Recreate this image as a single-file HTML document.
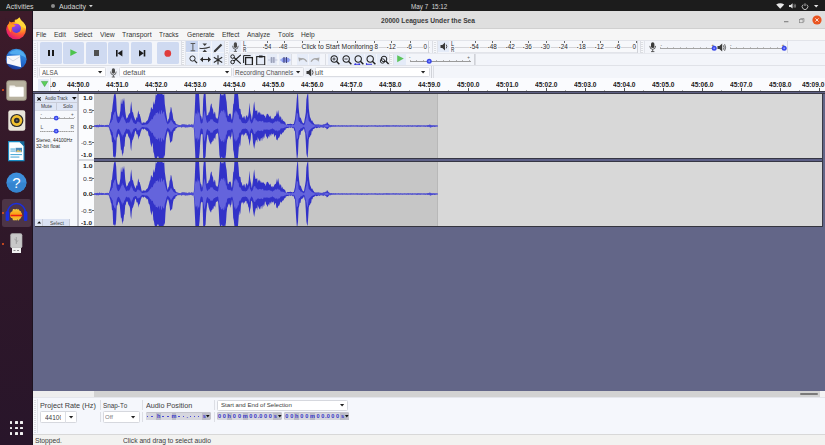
<!DOCTYPE html>
<html><head><meta charset="utf-8"><style>
*{margin:0;padding:0;box-sizing:border-box}
html,body{width:825px;height:445px;overflow:hidden}
body{position:relative;background:#636688;font-family:"Liberation Sans",sans-serif;color:#3c3c3c;font-kerning:none}
.a{position:absolute}
.t{position:absolute;white-space:nowrap;line-height:1;transform-origin:0 0}
svg{position:absolute;overflow:visible}
</style></head><body>
<div class="a" style="left:0px;top:0px;width:825px;height:11.3px;background:#1c1c1c;"></div>
<div class="t" style="left:6px;top:4px;font-size:6.6px;color:#d6d6d6;transform:scaleX(1.0599);">Activities</div>
<div class="a" style="left:51px;top:4.2px;width:4.2px;height:4.2px;background:#8c8c8c;border-radius:50%"></div>
<div class="t" style="left:59px;top:4px;font-size:6.6px;color:#d6d6d6;transform:scaleX(1.0666);">Audacity</div>
<svg style="left:89px;top:5px" width="4" height="3"><path d="M0,0H3.8L1.9,2.2Z" fill="#d6d6d6"/></svg>
<div class="t" style="left:410.7px;top:4px;font-size:6.6px;color:#d6d6d6;transform:scaleX(0.9540);">May&#160;7&#160;&#160;15:12</div>
<svg style="left:776px;top:3px" width="9" height="6"><path d="M0.2,1.6 Q4.2,-1.2 8.2,1.6 L4.2,5.8Z" fill="#e8e8e8"/></svg>
<svg style="left:789px;top:2.8px" width="8" height="6"><path d="M0,2H1.6L3.6,0.2V5.6L1.6,4H0Z" fill="#e0e0e0"/><path d="M4.8,1.6Q6,2.9 4.8,4.2" stroke="#bbb" stroke-width="0.7" fill="none"/><path d="M5.8,0.8Q7.6,2.9 5.8,5" stroke="#999" stroke-width="0.7" fill="none"/></svg>
<svg style="left:801px;top:2.5px" width="8" height="7"><path d="M2.2,1.6A2.8,2.8 0 1 0 5.8,1.6" stroke="#e0e0e0" stroke-width="0.8" fill="none"/><path d="M4,0.4V3" stroke="#e0e0e0" stroke-width="0.8"/></svg>
<svg style="left:813.5px;top:4.8px" width="5" height="3"><path d="M0,0H4.4L2.2,2.4Z" fill="#e8e8e8"/></svg>
<div class="a" style="left:0px;top:11.3px;width:32px;height:433.7px;background:linear-gradient(#3d1b2a,#301829 45%,#28152a);"></div>
<div class="a" style="left:31.6px;top:11px;width:1.2px;height:434px;background:#1e1220;"></div>
<svg style="left:4px;top:15px" width="24" height="26" viewBox="0 0 24 26">
<defs><radialGradient id="ffg" cx="0.78" cy="0.12" r="1.0"><stop offset="0" stop-color="#fff44a"/><stop offset="0.35" stop-color="#ffb321"/><stop offset="0.62" stop-color="#ff5a32"/><stop offset="0.9" stop-color="#e8206a"/></radialGradient>
<linearGradient id="ffp" x1="0.3" y1="0" x2="0.6" y2="1"><stop offset="0" stop-color="#b540ea"/><stop offset="1" stop-color="#4a40d8"/></linearGradient></defs>
<circle cx="12.1" cy="14.4" r="9.9" fill="url(#ffg)"/>
<path d="M10.5,6.5 Q13,4.5 15.5,2.3 Q16.5,5 19,7 Q22.5,10.5 22,14 L14,9Z" fill="#ffd83a"/>
<path d="M1.5,3 H11 L10.5,7.2 Q7,6.5 4,9.5 Q2.8,11 2.2,12.5Z" fill="#3b1b2b"/>
<path d="M4.2,10.2 L5.5,6.2 L7.8,8.2 L9.4,6.4 L10.6,9.4Z" fill="#ff8a1e"/>
<circle cx="12.4" cy="13.3" r="4.6" fill="url(#ffp)"/>
<path d="M3.5,10 Q8,8.3 11.8,10.6 Q10.5,12.4 8.2,12 Q7.2,14.5 6.8,17.5 Q4,15 3.5,10Z" fill="#ff9a1e"/>
</svg>
<svg style="left:5px;top:48px" width="23" height="23" viewBox="0 0 23 23">
<defs><linearGradient id="tbg" x1="0.6" y1="0" x2="0.2" y2="1"><stop offset="0" stop-color="#3a9ae8"/><stop offset="0.6" stop-color="#1f62c8"/><stop offset="1" stop-color="#1a2f8a"/></linearGradient></defs>
<circle cx="11.2" cy="11.2" r="10.4" fill="url(#tbg)"/>
<path d="M4,5 Q9,1 15,2.5 Q20,5 21,10 Q17,6.5 10,6.5 Q6,6.5 4,5Z" fill="#5ab4f4" opacity="0.8"/>
<path d="M1.8,8 L15,7.2 L16.2,19.2 L1.8,15.6Z" fill="#f6f7fa"/>
<path d="M2.5,9 L8,13 L15.2,8.5" stroke="#c4c8d4" stroke-width="0.7" fill="none"/>
</svg>
<svg style="left:6px;top:79.5px" width="21" height="21" viewBox="0 0 21 21">
<rect x="0.3" y="0.3" width="20.4" height="20.4" rx="3" fill="#a29d8a"/>
<rect x="1.2" y="1.2" width="18.6" height="18.6" rx="2.4" fill="#b8b2a0"/>
<path d="M3.5,5.5H8.5L9.8,6.8H17.5V16.5H3.5Z" fill="#f4f2ee"/>
<rect x="3.5" y="7.5" width="14" height="9" fill="#ffffff"/>
</svg>
<div class="a" style="left:2px;top:89px;width:1.8px;height:1.8px;background:#e8541e;border-radius:50%"></div>
<svg style="left:7.5px;top:110px" width="18" height="21" viewBox="0 0 18 21">
<rect x="0.3" y="0.3" width="17" height="20.4" rx="2.2" fill="#e9e5da"/>
<circle cx="8.8" cy="10.5" r="6.6" fill="#2b2b2b"/>
<circle cx="8.8" cy="10.5" r="5.4" fill="#f2c230"/>
<circle cx="8.8" cy="10.5" r="2.8" fill="#2b2b2b"/>
<circle cx="8.8" cy="10.5" r="1" fill="#6a6a6a"/>
</svg>
<svg style="left:8.3px;top:141.3px" width="17" height="21" viewBox="0 0 17 21">
<path d="M0.6,0.6H11.8L16,4.8V19.6H0.6Z" fill="#ffffff" stroke="#1a8cc4" stroke-width="1.1"/>
<path d="M11.2,0.2L16.4,5.4V0.2Z" fill="#1a6a9a"/>
<rect x="2.4" y="7.6" width="4.6" height="0.9" fill="#2a9ad0"/><rect x="2.4" y="9.6" width="4.6" height="0.9" fill="#2a9ad0"/>
<rect x="7.6" y="6.8" width="6.4" height="4.4" fill="#4a8ab8"/><path d="M8,11 L10,8.6 L11.4,10 L12.4,9 L13.8,11Z" fill="#d8c070"/>
<rect x="2.4" y="13.2" width="11.6" height="0.9" fill="#2a9ad0"/><rect x="2.4" y="15.6" width="9" height="0.9" fill="#2a9ad0"/>
</svg>
<svg style="left:5.5px;top:172px" width="21" height="21" viewBox="0 0 21 21">
<circle cx="10.5" cy="10.5" r="10" fill="#3d8fdc"/>
<path d="M0.5,10.5A10,10 0 0 0 20.5,10.5Z" fill="#3584d0"/>
<text x="10.5" y="15.8" font-family="Liberation Sans" font-size="15" fill="#fff" text-anchor="middle">?</text>
</svg>
<div class="a" style="left:2px;top:199px;width:29px;height:28px;background:#4d3547;border-radius:2.5px"></div>
<svg style="left:4px;top:200px" width="25" height="26" viewBox="0 0 25 26">
<defs><linearGradient id="aug" x1="0" y1="0" x2="0" y2="1"><stop offset="0" stop-color="#f0d040"/><stop offset="0.5" stop-color="#ff9a10"/><stop offset="1" stop-color="#f0d040"/></linearGradient></defs>
<path d="M3.6,17 V12.5 A8.9,8.9 0 0 1 21.4,12.5 V17" stroke="#1a2ee0" stroke-width="1.5" fill="none"/>
<rect x="1.6" y="11" width="3.6" height="10" rx="1.6" fill="#1a2ee0"/>
<rect x="19.8" y="11" width="3.6" height="10" rx="1.6" fill="#1a2ee0"/>
<path d="M6.0,14.0 L6.6,12.6 L7.2,11.4 L7.8,12.0 L8.4,11.1 L9.0,9.0 L9.6,9.0 L10.2,9.3 L10.8,9.2 L11.4,9.4 L12.0,8.9 L12.6,8.7 L13.2,10.1 L13.8,8.7 L14.4,9.3 L15.0,9.7 L15.6,10.8 L16.2,11.2 L16.8,11.0 L17.4,12.9 L18.0,13.5 L18.0,16.3 L17.4,16.8 L16.8,18.3 L16.2,18.8 L15.6,19.0 L15.0,20.2 L14.4,20.5 L13.8,20.6 L13.2,19.0 L12.6,20.8 L12.0,19.9 L11.4,20.3 L10.8,20.7 L10.2,19.7 L9.6,20.3 L9.0,20.4 L8.4,18.3 L7.8,17.9 L7.2,17.9 L6.6,17.2 L6.0,15.9Z" fill="url(#aug)"/>
<path d="M6.5,15.5 H18.5" stroke="#e8201a" stroke-width="1.5"/>
</svg>
<div class="a" style="left:2px;top:212px;width:1.8px;height:1.8px;background:#e8541e;border-radius:50%"></div>
<svg style="left:10px;top:233px" width="13" height="21" viewBox="0 0 13 21">
<rect x="0.3" y="0.3" width="12" height="15" rx="2" fill="#b8b8b8"/>
<rect x="1.2" y="1.2" width="10.2" height="13.4" rx="1.5" fill="#c8c8c8"/>
<rect x="2" y="15" width="9" height="5" fill="#f0f0f0"/>
<rect x="3.5" y="17" width="2" height="1" fill="#888"/><rect x="7" y="17" width="2" height="1" fill="#888"/>
<path d="M6.3,4V11 M6.3,7.5L4.3,6 M6.3,9L8.3,7.5" stroke="#909090" stroke-width="0.7" fill="none"/>
</svg>
<div class="a" style="left:2px;top:243px;width:1.8px;height:1.8px;background:#e8541e;border-radius:50%"></div>
<div class="a" style="left:9.5px;top:421.3px;width:2.8px;height:2.8px;background:#f0f0f0;border-radius:0.5px"></div>
<div class="a" style="left:14.8px;top:421.3px;width:2.8px;height:2.8px;background:#f0f0f0;border-radius:0.5px"></div>
<div class="a" style="left:20.1px;top:421.3px;width:2.8px;height:2.8px;background:#f0f0f0;border-radius:0.5px"></div>
<div class="a" style="left:9.5px;top:426.6px;width:2.8px;height:2.8px;background:#f0f0f0;border-radius:0.5px"></div>
<div class="a" style="left:14.8px;top:426.6px;width:2.8px;height:2.8px;background:#f0f0f0;border-radius:0.5px"></div>
<div class="a" style="left:20.1px;top:426.6px;width:2.8px;height:2.8px;background:#f0f0f0;border-radius:0.5px"></div>
<div class="a" style="left:9.5px;top:431.90000000000003px;width:2.8px;height:2.8px;background:#f0f0f0;border-radius:0.5px"></div>
<div class="a" style="left:14.8px;top:431.90000000000003px;width:2.8px;height:2.8px;background:#f0f0f0;border-radius:0.5px"></div>
<div class="a" style="left:20.1px;top:431.90000000000003px;width:2.8px;height:2.8px;background:#f0f0f0;border-radius:0.5px"></div>
<div class="a" style="left:33px;top:11.3px;width:792px;height:16.7px;background:#dfdfdf;"></div>
<div class="a" style="left:33px;top:27.5px;width:792px;height:0.9px;background:#d0d0d0;"></div>
<div class="t" style="left:381.3px;top:17px;font-size:7.2px;color:#3a3a3a;font-weight:bold;transform:scaleX(0.9267);">20000&#160;Leagues&#160;Under&#160;the&#160;Sea</div>
<svg style="left:783.5px;top:20.5px" width="5" height="2"><rect x="0" y="0.3" width="4.4" height="0.9" fill="#6a6a6a"/></svg>
<svg style="left:798.5px;top:18px" width="6" height="6"><rect x="0.5" y="1.5" width="3.5" height="3.2" fill="none" stroke="#8a8a8a" stroke-width="0.7"/><path d="M1.6,1.2V0.5H5V3.8H4.3" fill="none" stroke="#8a8a8a" stroke-width="0.7"/></svg>
<svg style="left:811.7px;top:15.2px" width="10" height="10"><circle cx="5" cy="5" r="4.6" fill="#e95420"/><path d="M3.4,3.4L6.6,6.6M6.6,3.4L3.4,6.6" stroke="#fff" stroke-width="0.8"/></svg>
<div class="a" style="left:33px;top:28.5px;width:792px;height:12px;background:#f6f6f6;"></div>
<div class="t" style="left:36.4px;top:32px;font-size:6.7px;color:#333333;transform:scaleX(0.9726);">File</div>
<div class="t" style="left:54.2px;top:32px;font-size:6.7px;color:#333333;transform:scaleX(1.0221);">Edit</div>
<div class="t" style="left:73.6px;top:32px;font-size:6.7px;color:#333333;transform:scaleX(0.9881);">Select</div>
<div class="t" style="left:99.7px;top:32px;font-size:6.7px;color:#333333;transform:scaleX(1.0191);">View</div>
<div class="t" style="left:122.2px;top:32px;font-size:6.7px;color:#333333;transform:scaleX(1.0324);">Transport</div>
<div class="t" style="left:159.4px;top:32px;font-size:6.7px;color:#333333;transform:scaleX(0.9751);">Tracks</div>
<div class="t" style="left:186.7px;top:32px;font-size:6.7px;color:#333333;transform:scaleX(0.9880);">Generate</div>
<div class="t" style="left:221.7px;top:32px;font-size:6.7px;color:#333333;transform:scaleX(1.0216);">Effect</div>
<div class="t" style="left:247.1px;top:32px;font-size:6.7px;color:#333333;transform:scaleX(0.9691);">Analyze</div>
<div class="t" style="left:278px;top:32px;font-size:6.7px;color:#333333;transform:scaleX(0.9644);">Tools</div>
<div class="t" style="left:301.3px;top:32px;font-size:6.7px;color:#333333;transform:scaleX(0.9942);">Help</div>
<div class="a" style="left:33px;top:40.3px;width:792px;height:50.7px;background:#f3f5fa;"></div>
<div class="a" style="left:33px;top:40.3px;width:792px;height:0.8px;background:#e2e4ea;"></div>
<div class="a" style="left:34.3px;top:42px;width:2.2px;height:22px;background:repeating-linear-gradient(#f8f9fc 0,#f8f9fc 1.1px,#dcdee2 1.1px,#dcdee2 2px)"></div>
<div class="a" style="left:37px;top:42px;width:0.8px;height:22px;background:#e2e4ea;"></div>
<div class="a" style="left:40.3px;top:42px;width:21.6px;height:21.8px;background:#cfdaf1;border-radius:1.6px"></div>
<div class="a" style="left:63px;top:42px;width:21.1px;height:21.8px;background:#cfdaf1;border-radius:1.6px"></div>
<div class="a" style="left:85.9px;top:42px;width:21.0px;height:21.8px;background:#cfdaf1;border-radius:1.6px"></div>
<div class="a" style="left:108.1px;top:42px;width:21.3px;height:21.8px;background:#cfdaf1;border-radius:1.6px"></div>
<div class="a" style="left:131px;top:42px;width:21.2px;height:21.8px;background:#cfdaf1;border-radius:1.6px"></div>
<div class="a" style="left:157.1px;top:42px;width:21.6px;height:21.8px;background:#cfdaf1;border-radius:1.6px"></div>
<div class="a" style="left:48px;top:49.7px;width:2.1px;height:6.3px;background:#1a1a1a;"></div>
<div class="a" style="left:51.8px;top:49.7px;width:2.1px;height:6.3px;background:#1a1a1a;"></div>
<svg style="left:70px;top:49.3px" width="8" height="8"><path d="M0.3,0.2L7.2,3.6L0.3,7.0Z" fill="#4dc44d"/></svg>
<div class="a" style="left:93.6px;top:50.2px;width:5.6px;height:5.4px;background:#505050;"></div>
<svg style="left:115.5px;top:49.5px" width="7" height="7"><rect x="0" y="0" width="1.6" height="6.5" fill="#1a1a1a"/><path d="M6.4,0L1.6,3.25L6.4,6.5Z" fill="#1a1a1a"/></svg>
<svg style="left:139px;top:49.5px" width="7" height="7"><rect x="4.7" y="0" width="1.6" height="6.5" fill="#1a1a1a"/><path d="M0,0L4.8,3.25L0,6.5Z" fill="#1a1a1a"/></svg>
<svg style="left:164px;top:49.5px" width="8" height="8"><circle cx="3.8" cy="3.4" r="3.35" fill="#e03c3c"/></svg>
<div class="a" style="left:180.8px;top:41px;width:0.9px;height:24px;background:#dcdee4;"></div>
<div class="a" style="left:182.3px;top:41px;width:2.2px;height:24px;background:repeating-linear-gradient(#f8f9fc 0,#f8f9fc 1.1px,#dcdee2 1.1px,#dcdee2 2px)"></div>
<div class="a" style="left:185px;top:41px;width:0.8px;height:24px;background:#e2e4ea;"></div>
<div class="a" style="left:186px;top:40.8px;width:12px;height:11.4px;background:#c8d5ef;"></div>
<div class="a" style="left:198.7px;top:40.8px;width:12.0px;height:11.4px;background:#e5ecf9;"></div>
<div class="a" style="left:211.5px;top:40.8px;width:12.0px;height:11.4px;background:#e5ecf9;"></div>
<div class="a" style="left:186px;top:53.3px;width:12px;height:11.6px;background:#e5ecf9;"></div>
<div class="a" style="left:198.7px;top:53.3px;width:12.0px;height:11.6px;background:#e5ecf9;"></div>
<div class="a" style="left:211.5px;top:53.3px;width:12.0px;height:11.6px;background:#e5ecf9;"></div>
<svg style="left:189.5px;top:43px" width="6" height="9"><path d="M0.6,0.5H5.2M2.9,0.5V7.8M0.6,7.8H5.2" stroke="#5a5a5a" stroke-width="1" fill="none"/></svg>
<svg style="left:199px;top:42.5px" width="12" height="10"><path d="M0.5,5.2Q5,6.2 11,4" stroke="#3a3a3a" stroke-width="1.1" fill="none"/><path d="M3.5,0.5H8L5.75,3Z" fill="#3a3a3a"/><path d="M3.5,9H8L5.75,6.5Z" fill="#3a3a3a"/></svg>
<svg style="left:212.5px;top:42.5px" width="11" height="10"><path d="M1.5,8.5L8.5,1.5" stroke="#3a3a3a" stroke-width="2.2"/><path d="M0.5,9.5L1.2,7.4L2.6,8.8Z" fill="#3a3a3a"/></svg>
<svg style="left:188.5px;top:54.5px" width="9" height="9"><circle cx="3.5" cy="3.5" r="2.6" stroke="#2a2a2a" stroke-width="1" fill="none"/><path d="M5.4,5.4L8,8" stroke="#2a2a2a" stroke-width="1.2"/></svg>
<svg style="left:199.5px;top:55.5px" width="11" height="7"><path d="M1.5,3.5H9.5" stroke="#2a2a2a" stroke-width="1.1"/><path d="M0,3.5L3,0.8V6.2Z" fill="#2a2a2a"/><path d="M11,3.5L8,0.8V6.2Z" fill="#2a2a2a"/></svg>
<svg style="left:212.5px;top:54.5px" width="10" height="10"><path d="M5,0.3V9.5M0.8,2.3L9.2,7.5M0.8,7.5L9.2,2.3" stroke="#2a2a2a" stroke-width="1.1"/></svg>
<div class="a" style="left:224.3px;top:41px;width:0.9px;height:24px;background:#dcdee4;"></div>
<div class="a" style="left:225.8px;top:41px;width:2.2px;height:11.5px;background:repeating-linear-gradient(#f8f9fc 0,#f8f9fc 1.1px,#dcdee2 1.1px,#dcdee2 2px)"></div>
<div class="a" style="left:228.5px;top:41px;width:0.8px;height:11.5px;background:#e2e4ea;"></div>
<div class="a" style="left:229.4px;top:41px;width:11.6px;height:11px;background:#e4ebf8;"></div>
<svg style="left:232px;top:42px" width="7" height="10"><rect x="1.8" y="0.3" width="3.2" height="5.6" rx="1.6" fill="#4a4a4a"/><path d="M0.6,3.8Q0.6,7.2 3.4,7.2Q6.2,7.2 6.2,3.8" stroke="#4a4a4a" stroke-width="0.8" fill="none"/><path d="M3.4,7.2V9.4M1.8,9.4H5" stroke="#4a4a4a" stroke-width="0.8"/></svg>
<div class="t" style="left:243px;top:41px;font-size:6.5px;color:#2a2a2a;transform:scaleX(0.8299);">L</div>
<div class="t" style="left:243px;top:47px;font-size:6.5px;color:#2a2a2a;transform:scaleX(0.7030);">R</div>
<div class="a" style="left:246.5px;top:41px;width:183.5px;height:11.5px;background:#f7f8fb;"></div>
<div class="a" style="left:246.5px;top:46.5px;width:183.5px;height:0.9px;background:#d4d4d8;"></div>
<div class="a" style="left:246.5px;top:52.4px;width:183.5px;height:0.7px;background:#e2e4ea;"></div>
<div class="a" style="left:266.7px;top:41.2px;width:0.7px;height:2px;background:#6a6a6a;"></div>
<div class="a" style="left:284.2px;top:41.2px;width:0.7px;height:2px;background:#6a6a6a;"></div>
<div class="a" style="left:301.7px;top:41.2px;width:0.7px;height:2px;background:#6a6a6a;"></div>
<div class="a" style="left:319.4px;top:41.2px;width:0.7px;height:2px;background:#6a6a6a;"></div>
<div class="a" style="left:337.4px;top:41.2px;width:0.7px;height:2px;background:#6a6a6a;"></div>
<div class="a" style="left:355.4px;top:41.2px;width:0.7px;height:2px;background:#6a6a6a;"></div>
<div class="a" style="left:373.5px;top:41.2px;width:0.7px;height:2px;background:#6a6a6a;"></div>
<div class="a" style="left:391.4px;top:41.2px;width:0.7px;height:2px;background:#6a6a6a;"></div>
<div class="a" style="left:409.5px;top:41.2px;width:0.7px;height:2px;background:#6a6a6a;"></div>
<div class="a" style="left:427.7px;top:41.2px;width:0.7px;height:2px;background:#6a6a6a;"></div>
<div class="t" style="left:262.3px;top:44px;font-size:6.5px;color:#2a2a2a;transform:scaleX(0.9367);background:#f7f8fb;padding:0 0.6px 0.5px 0.6px;margin-left:-0.6px">-54</div>
<div class="t" style="left:278.8px;top:44px;font-size:6.5px;color:#2a2a2a;transform:scaleX(0.9367);background:#f7f8fb;padding:0 0.6px 0.5px 0.6px;margin-left:-0.6px">-48</div>
<div class="t" style="left:301.6px;top:44px;font-size:6.5px;color:#2a2a2a;transform:scaleX(1.0348);background:#f7f8fb;padding:0 0.6px 0.5px 0.6px;margin-left:-0.6px">Click&#160;to&#160;Start&#160;Monitoring</div>
<div class="t" style="left:375px;top:44px;font-size:6.5px;color:#2a2a2a;transform:scaleX(0.9682);background:#f7f8fb;padding:0 0.6px 0.5px 0.6px;margin-left:-0.6px">8</div>
<div class="t" style="left:386.7px;top:44px;font-size:6.5px;color:#2a2a2a;transform:scaleX(0.9793);background:#f7f8fb;padding:0 0.6px 0.5px 0.6px;margin-left:-0.6px">-12</div>
<div class="t" style="left:406.6px;top:44px;font-size:6.5px;color:#2a2a2a;transform:scaleX(0.9343);background:#f7f8fb;padding:0 0.6px 0.5px 0.6px;margin-left:-0.6px">-6</div>
<div class="t" style="left:423.5px;top:44px;font-size:6.5px;color:#2a2a2a;transform:scaleX(0.9682);background:#f7f8fb;padding:0 0.6px 0.5px 0.6px;margin-left:-0.6px">0</div>
<div class="a" style="left:428.3px;top:41px;width:0.9px;height:12px;background:#d0d2d8;"></div>
<div class="a" style="left:431.5px;top:41px;width:0.9px;height:12px;background:#dcdee4;"></div>
<div class="a" style="left:434.0px;top:41px;width:2.2px;height:11.5px;background:repeating-linear-gradient(#f8f9fc 0,#f8f9fc 1.1px,#dcdee2 1.1px,#dcdee2 2px)"></div>
<div class="a" style="left:436.7px;top:41px;width:0.8px;height:11.5px;background:#e2e4ea;"></div>
<div class="a" style="left:437.6px;top:41px;width:11.6px;height:11px;background:#e4ebf8;"></div>
<svg style="left:439.5px;top:42.3px" width="9" height="9"><path d="M0.5,3H2.3L5,0.6V8.4L2.3,6H0.5Z" fill="#3a3a3a"/><path d="M6.2,2.6Q7.4,4.5 6.2,6.4" stroke="#3a3a3a" stroke-width="0.9" fill="none"/></svg>
<div class="t" style="left:451.2px;top:41px;font-size:6.5px;color:#2a2a2a;transform:scaleX(0.8299);">L</div>
<div class="t" style="left:451.2px;top:47px;font-size:6.5px;color:#2a2a2a;transform:scaleX(0.7030);">R</div>
<div class="a" style="left:455px;top:41px;width:182.3px;height:11.5px;background:#f7f8fb;"></div>
<div class="a" style="left:455px;top:46.5px;width:182.3px;height:0.9px;background:#d4d4d8;"></div>
<div class="a" style="left:455px;top:52.4px;width:182.3px;height:0.7px;background:#e2e4ea;"></div>
<div class="a" style="left:474.5px;top:41.2px;width:0.7px;height:2px;background:#6a6a6a;"></div>
<div class="t" style="left:469.3px;top:44px;font-size:6.5px;color:#2a2a2a;transform:scaleX(0.9793);background:#f7f8fb;padding:0 0.6px 0.5px 0.6px;margin-left:-0.6px">-54</div>
<div class="a" style="left:492.4px;top:41.2px;width:0.7px;height:2px;background:#6a6a6a;"></div>
<div class="t" style="left:487.2px;top:44px;font-size:6.5px;color:#2a2a2a;transform:scaleX(0.9793);background:#f7f8fb;padding:0 0.6px 0.5px 0.6px;margin-left:-0.6px">-48</div>
<div class="a" style="left:510.3px;top:41.2px;width:0.7px;height:2px;background:#6a6a6a;"></div>
<div class="t" style="left:505.1px;top:44px;font-size:6.5px;color:#2a2a2a;transform:scaleX(0.9793);background:#f7f8fb;padding:0 0.6px 0.5px 0.6px;margin-left:-0.6px">-42</div>
<div class="a" style="left:528.2px;top:41.2px;width:0.7px;height:2px;background:#6a6a6a;"></div>
<div class="t" style="left:523.0px;top:44px;font-size:6.5px;color:#2a2a2a;transform:scaleX(0.9793);background:#f7f8fb;padding:0 0.6px 0.5px 0.6px;margin-left:-0.6px">-36</div>
<div class="a" style="left:546.1px;top:41.2px;width:0.7px;height:2px;background:#6a6a6a;"></div>
<div class="t" style="left:540.9px;top:44px;font-size:6.5px;color:#2a2a2a;transform:scaleX(0.9793);background:#f7f8fb;padding:0 0.6px 0.5px 0.6px;margin-left:-0.6px">-30</div>
<div class="a" style="left:564.0px;top:41.2px;width:0.7px;height:2px;background:#6a6a6a;"></div>
<div class="t" style="left:558.8px;top:44px;font-size:6.5px;color:#2a2a2a;transform:scaleX(0.9793);background:#f7f8fb;padding:0 0.6px 0.5px 0.6px;margin-left:-0.6px">-24</div>
<div class="a" style="left:581.9px;top:41.2px;width:0.7px;height:2px;background:#6a6a6a;"></div>
<div class="t" style="left:576.7px;top:44px;font-size:6.5px;color:#2a2a2a;transform:scaleX(0.9793);background:#f7f8fb;padding:0 0.6px 0.5px 0.6px;margin-left:-0.6px">-18</div>
<div class="a" style="left:599.8px;top:41.2px;width:0.7px;height:2px;background:#6a6a6a;"></div>
<div class="t" style="left:594.6px;top:44px;font-size:6.5px;color:#2a2a2a;transform:scaleX(0.9793);background:#f7f8fb;padding:0 0.6px 0.5px 0.6px;margin-left:-0.6px">-12</div>
<div class="a" style="left:617.7px;top:41.2px;width:0.7px;height:2px;background:#6a6a6a;"></div>
<div class="t" style="left:614.3px;top:44px;font-size:6.5px;color:#2a2a2a;transform:scaleX(0.9862);background:#f7f8fb;padding:0 0.6px 0.5px 0.6px;margin-left:-0.6px">-6</div>
<div class="a" style="left:635.6px;top:41.2px;width:0.7px;height:2px;background:#6a6a6a;"></div>
<div class="t" style="left:632.2px;top:44px;font-size:6.5px;color:#2a2a2a;transform:scaleX(0.9682);background:#f7f8fb;padding:0 0.6px 0.5px 0.6px;margin-left:-0.6px">0</div>
<div class="a" style="left:637.3px;top:41px;width:0.9px;height:12px;background:#d0d2d8;"></div>
<div class="a" style="left:639.5px;top:41px;width:0.9px;height:12px;background:#dcdee4;"></div>
<div class="a" style="left:641.3px;top:41px;width:2.2px;height:11.5px;background:repeating-linear-gradient(#f8f9fc 0,#f8f9fc 1.1px,#dcdee2 1.1px,#dcdee2 2px)"></div>
<div class="a" style="left:644px;top:41px;width:0.8px;height:11.5px;background:#e2e4ea;"></div>
<svg style="left:648.5px;top:42px" width="8" height="10"><rect x="2" y="0.3" width="3.4" height="5.8" rx="1.7" fill="#3a3a3a"/><path d="M0.8,3.9Q0.8,7.3 3.7,7.3Q6.6,7.3 6.6,3.9" stroke="#3a3a3a" stroke-width="0.8" fill="none"/><path d="M3.7,7.3V9.6M2,9.6H5.4" stroke="#3a3a3a" stroke-width="0.8"/></svg>
<div class="a" style="left:660px;top:48.2px;width:53.5px;height:0.8px;background:#a4a4a4;"></div>
<div class="a" style="left:660.0px;top:47.4px;width:0.6px;height:0.9px;background:#c0c0c0;"></div>
<div class="a" style="left:666.6px;top:47.4px;width:0.6px;height:0.9px;background:#c0c0c0;"></div>
<div class="a" style="left:673.2px;top:47.4px;width:0.6px;height:0.9px;background:#c0c0c0;"></div>
<div class="a" style="left:679.8px;top:47.4px;width:0.6px;height:0.9px;background:#c0c0c0;"></div>
<div class="a" style="left:686.4px;top:47.4px;width:0.6px;height:0.9px;background:#c0c0c0;"></div>
<div class="a" style="left:693.0px;top:47.4px;width:0.6px;height:0.9px;background:#c0c0c0;"></div>
<div class="a" style="left:699.6px;top:47.4px;width:0.6px;height:0.9px;background:#c0c0c0;"></div>
<div class="a" style="left:706.2px;top:47.4px;width:0.6px;height:0.9px;background:#c0c0c0;"></div>
<div class="a" style="left:712.8px;top:47.4px;width:0.6px;height:0.9px;background:#c0c0c0;"></div>
<div class="t" style="left:660.5px;top:44.2px;font-size:4.5px;color:#555;">-</div>
<div class="t" style="left:711.6px;top:44.2px;font-size:4.5px;color:#555;">+</div>
<svg style="left:710.5px;top:45px" width="7" height="7"><circle cx="3.2" cy="3.3" r="2.5" fill="#3a48e8"/><circle cx="3.2" cy="3.3" r="1" fill="#8a98ff"/></svg>
<svg style="left:716.5px;top:43px" width="10" height="9"><path d="M0.5,3H2.4L5.2,0.5V8.5L2.4,6H0.5Z" fill="#3a3a3a"/><path d="M6.4,2.4Q7.8,4.5 6.4,6.6M7.6,1.2Q9.6,4.5 7.6,7.8" stroke="#3a3a3a" stroke-width="0.8" fill="none"/></svg>
<div class="a" style="left:729.7px;top:48.2px;width:54px;height:0.8px;background:#a4a4a4;"></div>
<div class="a" style="left:729.7px;top:47.4px;width:0.6px;height:0.9px;background:#c0c0c0;"></div>
<div class="a" style="left:736.4000000000001px;top:47.4px;width:0.6px;height:0.9px;background:#c0c0c0;"></div>
<div class="a" style="left:743.1px;top:47.4px;width:0.6px;height:0.9px;background:#c0c0c0;"></div>
<div class="a" style="left:749.8000000000001px;top:47.4px;width:0.6px;height:0.9px;background:#c0c0c0;"></div>
<div class="a" style="left:756.5px;top:47.4px;width:0.6px;height:0.9px;background:#c0c0c0;"></div>
<div class="a" style="left:763.2px;top:47.4px;width:0.6px;height:0.9px;background:#c0c0c0;"></div>
<div class="a" style="left:769.9000000000001px;top:47.4px;width:0.6px;height:0.9px;background:#c0c0c0;"></div>
<div class="a" style="left:776.6px;top:47.4px;width:0.6px;height:0.9px;background:#c0c0c0;"></div>
<div class="a" style="left:783.3000000000001px;top:47.4px;width:0.6px;height:0.9px;background:#c0c0c0;"></div>
<div class="t" style="left:730px;top:44.2px;font-size:4.5px;color:#555;">-</div>
<div class="t" style="left:781.8px;top:44.2px;font-size:4.5px;color:#555;">+</div>
<svg style="left:780.5px;top:45px" width="7" height="7"><circle cx="3.2" cy="3.3" r="2.5" fill="#3a48e8"/><circle cx="3.2" cy="3.3" r="1" fill="#8a98ff"/></svg>
<div class="a" style="left:787.3px;top:41px;width:0.9px;height:12px;background:#d8dae0;"></div>
<div class="a" style="left:224.5px;top:53px;width:600.5px;height:0.9px;background:#e6e8ee;"></div>
<div class="a" style="left:225.3px;top:54px;width:2.2px;height:11px;background:repeating-linear-gradient(#f8f9fc 0,#f8f9fc 1.1px,#dcdee2 1.1px,#dcdee2 2px)"></div>
<div class="a" style="left:228px;top:54px;width:0.8px;height:11px;background:#e2e4ea;"></div>
<div class="a" style="left:229.3px;top:53.5px;width:11.4px;height:11.2px;background:#e6ecf8;"></div>
<div class="a" style="left:242px;top:53.5px;width:11px;height:11.2px;background:#e6ecf8;"></div>
<div class="a" style="left:254.7px;top:53.5px;width:10.6px;height:11.2px;background:#e6ecf8;"></div>
<div class="a" style="left:266.7px;top:53.5px;width:10.6px;height:11.2px;background:#e6ecf8;"></div>
<div class="a" style="left:278.7px;top:53.5px;width:12.0px;height:11.2px;background:#e6ecf8;"></div>
<div class="a" style="left:297.3px;top:53.5px;width:10.7px;height:11.2px;background:#e6ecf8;"></div>
<div class="a" style="left:309px;top:53.5px;width:11px;height:11.2px;background:#e6ecf8;"></div>
<svg style="left:229.5px;top:54px" width="12" height="11"><circle cx="2.6" cy="8" r="1.8" stroke="#1e1e1e" stroke-width="1" fill="none"/><circle cx="2.6" cy="2.6" r="1.8" stroke="#1e1e1e" stroke-width="1" fill="none"/><path d="M4,3.5L10.8,9.6M4,7L10.8,0.8" stroke="#1e1e1e" stroke-width="1.1"/></svg>
<svg style="left:242.5px;top:54.5px" width="11" height="11"><path d="M0.6,8V0.6H7.6" stroke="#1e1e1e" stroke-width="1" fill="none"/><rect x="2.6" y="2.6" width="6.8" height="7.4" stroke="#1e1e1e" stroke-width="1.3" fill="none"/></svg>
<svg style="left:255.5px;top:54.5px" width="10" height="11"><rect x="0.7" y="1.6" width="8" height="8.4" stroke="#1e1e1e" stroke-width="1.1" fill="none"/><rect x="3" y="0.5" width="3.6" height="2" fill="#1e1e1e"/></svg>
<svg style="left:267.5px;top:56.5px" width="10" height="6"><path d="M0,3H9.5" stroke="#b8bed4" stroke-width="0.8"/><rect x="2.2" y="0.3" width="5" height="5.4" fill="#c0c6dc"/><path d="M3.6,0V6M5.8,0V6" stroke="#8a90a8" stroke-width="0.8"/></svg>
<svg style="left:279.5px;top:56.5px" width="11" height="6"><path d="M0,3H10.5" stroke="#7a8ae8" stroke-width="0.8"/><rect x="1.5" y="0.8" width="8" height="4.4" rx="1.5" fill="#8a9af0"/><path d="M4,0V6M6.4,0V6" stroke="#2a2a5a" stroke-width="0.9"/></svg>
<svg style="left:298.2px;top:56.2px" width="10" height="7"><path d="M2.6,3.6Q5.5,1.2 8.8,5.6" stroke="#a8a8a8" stroke-width="1.4" fill="none"/><path d="M0.3,1.6L4.2,2.2L1.2,5.8Z" fill="#a8a8a8"/></svg>
<svg style="left:310px;top:56.2px" width="10" height="7"><path d="M7.2,3.6Q4.3,1.2 1,5.6" stroke="#a8a8a8" stroke-width="1.4" fill="none"/><path d="M9.5,1.6L5.6,2.2L8.6,5.8Z" fill="#a8a8a8"/></svg>
<div class="a" style="left:291px;top:53.5px;width:0.9px;height:11.5px;background:#dcdee4;"></div>
<div class="a" style="left:324.5px;top:53.5px;width:0.9px;height:11.5px;background:#dcdee4;"></div>
<div class="a" style="left:327.8px;top:53.5px;width:11.7px;height:11.2px;background:#e6ecf8;"></div>
<div class="a" style="left:340px;top:53.5px;width:11.5px;height:11.2px;background:#e6ecf8;"></div>
<div class="a" style="left:352px;top:53.5px;width:12px;height:11.2px;background:#e6ecf8;"></div>
<div class="a" style="left:364.5px;top:53.5px;width:11.7px;height:11.2px;background:#e6ecf8;"></div>
<div class="a" style="left:377px;top:53.5px;width:11px;height:11.2px;background:#e6ecf8;"></div>
<svg style="left:329.5px;top:54.5px" width="11" height="11"><circle cx="4.2" cy="4" r="3.2" stroke="#1e1e1e" stroke-width="1.05" fill="none"/><path d="M6.4,6.2L9.4,9.2" stroke="#1e1e1e" stroke-width="1.4"/><path d="M2.4,4H5.6M4,2.4V5.6" stroke="#1e1e1e" stroke-width="0.8"/></svg>
<svg style="left:341.5px;top:54.5px" width="11" height="11"><circle cx="4.2" cy="4" r="3.2" stroke="#1e1e1e" stroke-width="1.05" fill="none"/><path d="M6.4,6.2L9.4,9.2" stroke="#1e1e1e" stroke-width="1.4"/><path d="M2.4,4H5.6" stroke="#1e1e1e" stroke-width="0.8"/></svg>
<svg style="left:353.5px;top:54.5px" width="11" height="11"><circle cx="4.2" cy="4" r="3.2" stroke="#1e1e1e" stroke-width="1.05" fill="none"/><path d="M6.4,6.2L9.4,9.2" stroke="#1e1e1e" stroke-width="1.4"/><path d="M0.5,9.3H6" stroke="#2a2ae0" stroke-width="0.9"/><path d="M0,9.3L1.8,8V10.6Z M6.5,9.3L4.7,8V10.6Z" fill="#2a2ae0"/></svg>
<svg style="left:365.5px;top:54.5px" width="11" height="11"><circle cx="4.2" cy="4" r="3.2" stroke="#1e1e1e" stroke-width="1.05" fill="none"/><path d="M6.4,6.2L9.4,9.2" stroke="#1e1e1e" stroke-width="1.4"/><path d="M0.6,8V10.6M0.6,9.3H6" stroke="#2a2ae0" stroke-width="0.9"/></svg>
<svg style="left:378.5px;top:54.5px" width="11" height="11"><circle cx="5" cy="4" r="2.8" stroke="#1e1e1e" stroke-width="1" fill="none"/><circle cx="3.5" cy="6" r="2.2" stroke="#1e1e1e" stroke-width="0.9" fill="none"/><path d="M7,6.2L9.6,9" stroke="#1e1e1e" stroke-width="1.3"/></svg>
<div class="a" style="left:388.6px;top:53.5px;width:0.9px;height:11.5px;background:#dcdee4;"></div>
<div class="a" style="left:389.90000000000003px;top:54px;width:2.2px;height:11px;background:repeating-linear-gradient(#f8f9fc 0,#f8f9fc 1.1px,#dcdee2 1.1px,#dcdee2 2px)"></div>
<div class="a" style="left:392.6px;top:54px;width:0.8px;height:11px;background:#e2e4ea;"></div>
<div class="a" style="left:394px;top:53.5px;width:11.6px;height:11.2px;background:#e4ebf8;"></div>
<svg style="left:396.8px;top:55.3px" width="8" height="8"><path d="M0.2,0.2L6.8,3.6L0.2,7.2Z" fill="#5cc45c"/></svg>
<div class="t" style="left:409px;top:56px;font-size:4.5px;color:#555;">-</div>
<div class="a" style="left:409.5px;top:61px;width:61px;height:0.8px;background:#9a9a9a;"></div>
<div class="a" style="left:409.5px;top:60px;width:0.6px;height:1px;background:#b0b0b0;"></div>
<div class="a" style="left:416.1px;top:60px;width:0.6px;height:1px;background:#b0b0b0;"></div>
<div class="a" style="left:422.7px;top:60px;width:0.6px;height:1px;background:#b0b0b0;"></div>
<div class="a" style="left:429.3px;top:60px;width:0.6px;height:1px;background:#b0b0b0;"></div>
<div class="a" style="left:435.9px;top:60px;width:0.6px;height:1px;background:#b0b0b0;"></div>
<div class="a" style="left:442.5px;top:60px;width:0.6px;height:1px;background:#b0b0b0;"></div>
<div class="a" style="left:449.1px;top:60px;width:0.6px;height:1px;background:#b0b0b0;"></div>
<div class="a" style="left:455.7px;top:60px;width:0.6px;height:1px;background:#b0b0b0;"></div>
<div class="a" style="left:462.3px;top:60px;width:0.6px;height:1px;background:#b0b0b0;"></div>
<div class="a" style="left:468.9px;top:60px;width:0.6px;height:1px;background:#b0b0b0;"></div>
<div class="t" style="left:467.2px;top:56px;font-size:4.5px;color:#555;">+</div>
<svg style="left:425.8px;top:58px" width="7" height="7"><circle cx="3.2" cy="3.3" r="2.5" fill="#3a48e8"/><circle cx="3.2" cy="3.3" r="1" fill="#8a98ff"/></svg>
<div class="a" style="left:474px;top:53.5px;width:0.9px;height:11.5px;background:#d0d2d8;"></div>
<div class="a" style="left:475.4px;top:53.5px;width:0.9px;height:11.5px;background:#dcdee4;"></div>
<div class="a" style="left:33px;top:65px;width:792px;height:0.9px;background:#e0e2e8;"></div>
<div class="a" style="left:34.3px;top:66.5px;width:2.2px;height:11px;background:repeating-linear-gradient(#f8f9fc 0,#f8f9fc 1.1px,#dcdee2 1.1px,#dcdee2 2px)"></div>
<div class="a" style="left:37px;top:66.5px;width:0.8px;height:11px;background:#e2e4ea;"></div>
<div class="a" style="left:39px;top:66.8px;width:66.7px;height:10.4px;background:#ffffff;border:0.8px solid #dadce2;border-radius:1.5px"></div>
<div class="t" style="left:42px;top:70px;font-size:6.5px;color:#505050;transform:scaleX(0.9506);">ALSA</div>
<svg style="left:98.3px;top:70.7px" width="5" height="3"><path d="M0,0H4.2L2.1,2.4Z" fill="#222"/></svg>
<div class="a" style="left:106.5px;top:66.8px;width:11px;height:10.4px;background:#eef1f8;"></div>
<svg style="left:110px;top:68px" width="7" height="10"><rect x="1.8" y="0.3" width="3.2" height="5.4" rx="1.6" fill="#4a4a4a"/><path d="M0.6,3.6Q0.6,7 3.4,7Q6.2,7 6.2,3.6" stroke="#4a4a4a" stroke-width="0.8" fill="none"/><path d="M3.4,7V9M1.8,9H5" stroke="#4a4a4a" stroke-width="0.8"/></svg>
<div class="a" style="left:119px;top:66.8px;width:112.7px;height:10.4px;background:#ffffff;border:0.8px solid #dadce2;border-radius:1.5px"></div>
<div class="t" style="left:122.8px;top:70px;font-size:6.5px;color:#505050;transform:scaleX(1.1375);">default</div>
<svg style="left:225.4px;top:70.7px" width="5" height="3"><path d="M0,0H4.2L2.1,2.4Z" fill="#222"/></svg>
<div class="a" style="left:233.2px;top:66.8px;width:70.5px;height:10.4px;background:#f6f7fb;border:0.8px solid #dadce2;border-radius:1.5px"></div>
<div class="t" style="left:234.6px;top:70px;font-size:6.5px;color:#505050;transform:scaleX(0.9882);">Recording&#160;Channels</div>
<svg style="left:295.6px;top:70.7px" width="5" height="3"><path d="M0,0H4.2L2.1,2.4Z" fill="#222"/></svg>
<div class="a" style="left:304.5px;top:66.8px;width:11px;height:10.4px;background:#eef1f8;"></div>
<svg style="left:305.5px;top:68.2px" width="9" height="9"><path d="M0.5,3H2.4L5.2,0.5V8.5L2.4,6H0.5Z" fill="#3a3a3a"/><path d="M6.3,2.3Q7.8,4.5 6.3,6.7" stroke="#3a3a3a" stroke-width="0.9" fill="none"/></svg>
<div class="a" style="left:314.5px;top:66.8px;width:115px;height:10.4px;background:#ffffff;border:0.8px solid #dadce2;border-radius:1.5px"></div>
<div class="t" style="left:315.4px;top:70px;font-size:6.5px;color:#505050;transform:scaleX(1.1653);">ult</div>
<svg style="left:421.4px;top:70.7px" width="5" height="3"><path d="M0,0H4.2L2.1,2.4Z" fill="#222"/></svg>
<div class="a" style="left:431px;top:66px;width:0.9px;height:12px;background:#d0d2d8;"></div>
<div class="a" style="left:432.5px;top:66px;width:0.9px;height:12px;background:#dcdee4;"></div>
<div class="a" style="left:33px;top:77.9px;width:792px;height:0.9px;background:#e6e8ee;"></div>
<div class="a" style="left:33px;top:78.4px;width:792px;height:12.5px;background:#fafbfe;"></div>
<div class="a" style="left:37.8px;top:78.6px;width:11.6px;height:12.2px;background:#e6ecf8;"></div>
<svg style="left:40.8px;top:81.2px" width="8" height="7"><path d="M0.4,0.4H6.8L3.6,5.6Z" fill="#5ad05a" stroke="#3a9a3a" stroke-width="0.5"/></svg>
<div class="a" style="left:49.6px;top:78.4px;width:0.8px;height:12.5px;background:#e0e2e8;"></div>
<div class="t" style="left:50px;top:82px;font-size:6.5px;color:#1a1a1a;font-weight:bold;transform:scaleX(1.1068);">.0</div>
<div class="t" style="left:67.3px;top:82px;font-size:6.5px;color:#1a1a1a;font-weight:bold;transform:scaleX(1.0161);">44:50.0</div>
<div class="a" style="left:78.15px;top:88px;width:0.7px;height:2.9px;background:#555;"></div>
<div class="a" style="left:97.69px;top:89.6px;width:0.6px;height:1.3px;background:#aaa;"></div>
<div class="a" style="left:58.72px;top:89.6px;width:0.6px;height:1.3px;background:#aaa;"></div>
<div class="t" style="left:106.3px;top:82px;font-size:6.5px;color:#1a1a1a;font-weight:bold;transform:scaleX(1.0161);">44:51.0</div>
<div class="a" style="left:117.12px;top:88px;width:0.7px;height:2.9px;background:#555;"></div>
<div class="a" style="left:136.65px;top:89.6px;width:0.6px;height:1.3px;background:#aaa;"></div>
<div class="a" style="left:97.69px;top:89.6px;width:0.6px;height:1.3px;background:#aaa;"></div>
<div class="t" style="left:145.2px;top:82px;font-size:6.5px;color:#1a1a1a;font-weight:bold;transform:scaleX(1.0161);">44:52.0</div>
<div class="a" style="left:156.09px;top:88px;width:0.7px;height:2.9px;background:#555;"></div>
<div class="a" style="left:175.62px;top:89.6px;width:0.6px;height:1.3px;background:#aaa;"></div>
<div class="a" style="left:136.65px;top:89.6px;width:0.6px;height:1.3px;background:#aaa;"></div>
<div class="t" style="left:184.2px;top:82px;font-size:6.5px;color:#1a1a1a;font-weight:bold;transform:scaleX(1.0161);">44:53.0</div>
<div class="a" style="left:195.06px;top:88px;width:0.7px;height:2.9px;background:#555;"></div>
<div class="a" style="left:214.59px;top:89.6px;width:0.6px;height:1.3px;background:#aaa;"></div>
<div class="a" style="left:175.62px;top:89.6px;width:0.6px;height:1.3px;background:#aaa;"></div>
<div class="t" style="left:223.2px;top:82px;font-size:6.5px;color:#1a1a1a;font-weight:bold;transform:scaleX(1.0161);">44:54.0</div>
<div class="a" style="left:234.03px;top:88px;width:0.7px;height:2.9px;background:#555;"></div>
<div class="a" style="left:253.56px;top:89.6px;width:0.6px;height:1.3px;background:#aaa;"></div>
<div class="a" style="left:214.59px;top:89.6px;width:0.6px;height:1.3px;background:#aaa;"></div>
<div class="t" style="left:262.2px;top:82px;font-size:6.5px;color:#1a1a1a;font-weight:bold;transform:scaleX(1.0161);">44:55.0</div>
<div class="a" style="left:273.0px;top:88px;width:0.7px;height:2.9px;background:#555;"></div>
<div class="a" style="left:292.54px;top:89.6px;width:0.6px;height:1.3px;background:#aaa;"></div>
<div class="a" style="left:253.56px;top:89.6px;width:0.6px;height:1.3px;background:#aaa;"></div>
<div class="t" style="left:301.1px;top:82px;font-size:6.5px;color:#1a1a1a;font-weight:bold;transform:scaleX(1.0161);">44:56.0</div>
<div class="a" style="left:311.97px;top:88px;width:0.7px;height:2.9px;background:#555;"></div>
<div class="a" style="left:331.5px;top:89.6px;width:0.6px;height:1.3px;background:#aaa;"></div>
<div class="a" style="left:292.53px;top:89.6px;width:0.6px;height:1.3px;background:#aaa;"></div>
<div class="t" style="left:340.1px;top:82px;font-size:6.5px;color:#1a1a1a;font-weight:bold;transform:scaleX(1.0161);">44:57.0</div>
<div class="a" style="left:350.94px;top:88px;width:0.7px;height:2.9px;background:#555;"></div>
<div class="a" style="left:370.47px;top:89.6px;width:0.6px;height:1.3px;background:#aaa;"></div>
<div class="a" style="left:331.5px;top:89.6px;width:0.6px;height:1.3px;background:#aaa;"></div>
<div class="t" style="left:379.1px;top:82px;font-size:6.5px;color:#1a1a1a;font-weight:bold;transform:scaleX(1.0161);">44:58.0</div>
<div class="a" style="left:389.91px;top:88px;width:0.7px;height:2.9px;background:#555;"></div>
<div class="a" style="left:409.44px;top:89.6px;width:0.6px;height:1.3px;background:#aaa;"></div>
<div class="a" style="left:370.47px;top:89.6px;width:0.6px;height:1.3px;background:#aaa;"></div>
<div class="t" style="left:418.0px;top:82px;font-size:6.5px;color:#1a1a1a;font-weight:bold;transform:scaleX(1.0161);">44:59.0</div>
<div class="a" style="left:428.88px;top:88px;width:0.7px;height:2.9px;background:#555;"></div>
<div class="a" style="left:448.42px;top:89.6px;width:0.6px;height:1.3px;background:#aaa;"></div>
<div class="a" style="left:409.44px;top:89.6px;width:0.6px;height:1.3px;background:#aaa;"></div>
<div class="t" style="left:457.0px;top:82px;font-size:6.5px;color:#1a1a1a;font-weight:bold;transform:scaleX(1.0161);">45:00.0</div>
<div class="a" style="left:467.85px;top:88px;width:0.7px;height:2.9px;background:#555;"></div>
<div class="a" style="left:487.38px;top:89.6px;width:0.6px;height:1.3px;background:#aaa;"></div>
<div class="a" style="left:448.41px;top:89.6px;width:0.6px;height:1.3px;background:#aaa;"></div>
<div class="t" style="left:496.0px;top:82px;font-size:6.5px;color:#1a1a1a;font-weight:bold;transform:scaleX(1.0161);">45:01.0</div>
<div class="a" style="left:506.82px;top:88px;width:0.7px;height:2.9px;background:#555;"></div>
<div class="a" style="left:526.36px;top:89.6px;width:0.6px;height:1.3px;background:#aaa;"></div>
<div class="a" style="left:487.38px;top:89.6px;width:0.6px;height:1.3px;background:#aaa;"></div>
<div class="t" style="left:534.9px;top:82px;font-size:6.5px;color:#1a1a1a;font-weight:bold;transform:scaleX(1.0161);">45:02.0</div>
<div class="a" style="left:545.79px;top:88px;width:0.7px;height:2.9px;background:#555;"></div>
<div class="a" style="left:565.33px;top:89.6px;width:0.6px;height:1.3px;background:#aaa;"></div>
<div class="a" style="left:526.36px;top:89.6px;width:0.6px;height:1.3px;background:#aaa;"></div>
<div class="t" style="left:573.9px;top:82px;font-size:6.5px;color:#1a1a1a;font-weight:bold;transform:scaleX(1.0161);">45:03.0</div>
<div class="a" style="left:584.76px;top:88px;width:0.7px;height:2.9px;background:#555;"></div>
<div class="a" style="left:604.3px;top:89.6px;width:0.6px;height:1.3px;background:#aaa;"></div>
<div class="a" style="left:565.33px;top:89.6px;width:0.6px;height:1.3px;background:#aaa;"></div>
<div class="t" style="left:612.9px;top:82px;font-size:6.5px;color:#1a1a1a;font-weight:bold;transform:scaleX(1.0161);">45:04.0</div>
<div class="a" style="left:623.73px;top:88px;width:0.7px;height:2.9px;background:#555;"></div>
<div class="a" style="left:643.26px;top:89.6px;width:0.6px;height:1.3px;background:#aaa;"></div>
<div class="a" style="left:604.29px;top:89.6px;width:0.6px;height:1.3px;background:#aaa;"></div>
<div class="t" style="left:651.8px;top:82px;font-size:6.5px;color:#1a1a1a;font-weight:bold;transform:scaleX(1.0161);">45:05.0</div>
<div class="a" style="left:662.7px;top:88px;width:0.7px;height:2.9px;background:#555;"></div>
<div class="a" style="left:682.24px;top:89.6px;width:0.6px;height:1.3px;background:#aaa;"></div>
<div class="a" style="left:643.26px;top:89.6px;width:0.6px;height:1.3px;background:#aaa;"></div>
<div class="t" style="left:690.8px;top:82px;font-size:6.5px;color:#1a1a1a;font-weight:bold;transform:scaleX(1.0161);">45:06.0</div>
<div class="a" style="left:701.67px;top:88px;width:0.7px;height:2.9px;background:#555;"></div>
<div class="a" style="left:721.21px;top:89.6px;width:0.6px;height:1.3px;background:#aaa;"></div>
<div class="a" style="left:682.24px;top:89.6px;width:0.6px;height:1.3px;background:#aaa;"></div>
<div class="t" style="left:729.8px;top:82px;font-size:6.5px;color:#1a1a1a;font-weight:bold;transform:scaleX(1.0161);">45:07.0</div>
<div class="a" style="left:740.64px;top:88px;width:0.7px;height:2.9px;background:#555;"></div>
<div class="a" style="left:760.18px;top:89.6px;width:0.6px;height:1.3px;background:#aaa;"></div>
<div class="a" style="left:721.21px;top:89.6px;width:0.6px;height:1.3px;background:#aaa;"></div>
<div class="t" style="left:768.8px;top:82px;font-size:6.5px;color:#1a1a1a;font-weight:bold;transform:scaleX(1.0161);">45:08.0</div>
<div class="a" style="left:779.61px;top:88px;width:0.7px;height:2.9px;background:#555;"></div>
<div class="a" style="left:799.15px;top:89.6px;width:0.6px;height:1.3px;background:#aaa;"></div>
<div class="a" style="left:760.18px;top:89.6px;width:0.6px;height:1.3px;background:#aaa;"></div>
<div class="t" style="left:801.8px;top:82px;font-size:6.5px;color:#1a1a1a;font-weight:bold;transform:scaleX(1.0161);">45:09.0</div>
<div class="a" style="left:818.58px;top:88px;width:0.7px;height:2.9px;background:#555;"></div>
<div class="a" style="left:838.12px;top:89.6px;width:0.6px;height:1.3px;background:#aaa;"></div>
<div class="a" style="left:799.14px;top:89.6px;width:0.6px;height:1.3px;background:#aaa;"></div>
<div class="a" style="left:33px;top:90.9px;width:792px;height:1px;background:#3a3a46;"></div>
<div class="a" style="left:33px;top:91.9px;width:792px;height:1.4px;background:#5e6084;"></div>
<div class="a" style="left:33px;top:93.3px;width:792px;height:0.8px;background:#3a3a46;"></div>
<div class="a" style="left:34.5px;top:93.6px;width:0.7px;height:133.4px;background:#3e3e4c;"></div>
<div class="a" style="left:35.2px;top:94px;width:42.1px;height:132.2px;background:#f6f8fc;"></div>
<div class="a" style="left:77.2px;top:94px;width:1.8px;height:132.2px;background:#c2c4cc;"></div>
<div class="a" style="left:79px;top:94px;width:15px;height:132.2px;background:#fbfcfe;"></div>
<div class="a" style="left:34.5px;top:226.2px;width:788.5px;height:1.3px;background:#34343e;"></div>
<div class="a" style="left:94px;top:94px;width:344px;height:65.2px;background:#c6c6c6;"></div>
<div class="a" style="left:438px;top:94px;width:384px;height:65.2px;background:#d8d8d8;"></div>
<div class="a" style="left:437.2px;top:94px;width:0.8px;height:65.2px;background:#b8b8b8;"></div>
<div class="a" style="left:94px;top:161px;width:344px;height:65.2px;background:#c6c6c6;"></div>
<div class="a" style="left:438px;top:161px;width:384px;height:65.2px;background:#d8d8d8;"></div>
<div class="a" style="left:437.2px;top:161px;width:0.8px;height:65.2px;background:#b8b8b8;"></div>
<div class="a" style="left:94px;top:158.4px;width:728px;height:3.4px;background:#5d6086;"></div>
<div class="a" style="left:94px;top:158.4px;width:728px;height:0.9px;background:#363644;"></div>
<div class="a" style="left:94px;top:160.9px;width:728px;height:0.9px;background:#363644;"></div>
<div class="a" style="left:79px;top:159.2px;width:15px;height:1.6px;background:#d8dae0;"></div>
<div class="a" style="left:822px;top:93.6px;width:0.9px;height:133.5px;background:#3a3a46;"></div>
<div class="a" style="left:35px;top:94px;width:7.5px;height:8.2px;background:#dfe6f5;"></div>
<svg style="left:37.4px;top:96.5px" width="5" height="5"><path d="M0.4,0.4L3.7,3.5M3.7,0.4L0.4,3.5" stroke="#111" stroke-width="1.05"/></svg>
<div class="a" style="left:42.6px;top:94px;width:0.7px;height:8.2px;background:#c8ccd8;"></div>
<div class="a" style="left:43.3px;top:94px;width:33.9px;height:8.2px;background:#dfe6f5;"></div>
<div class="t" style="left:44.5px;top:96px;font-size:5px;color:#383838;transform:scaleX(0.8472);">Audio&#160;Track</div>
<svg style="left:71.5px;top:96.8px" width="5" height="4"><path d="M0,0H4.6L2.3,2.8Z" fill="#111"/></svg>
<div class="a" style="left:35px;top:102.2px;width:42.2px;height:0.7px;background:#c8ccd8;"></div>
<div class="a" style="left:35px;top:102.9px;width:21px;height:7.3px;background:#dfe6f5;"></div>
<div class="a" style="left:56px;top:102.9px;width:0.7px;height:7.3px;background:#c8ccd8;"></div>
<div class="a" style="left:56.7px;top:102.9px;width:20.5px;height:7.3px;background:#dfe6f5;"></div>
<div class="t" style="left:40.5px;top:103.5px;font-size:5px;color:#383838;transform:scaleX(0.9896);">Mute</div>
<div class="t" style="left:62.5px;top:103.5px;font-size:5px;color:#383838;transform:scaleX(0.9593);">Solo</div>
<div class="a" style="left:35px;top:110.2px;width:42.2px;height:0.6px;background:#d8dce6;"></div>
<div class="t" style="left:40.5px;top:112.5px;font-size:4.5px;color:#555;">-</div>
<div class="t" style="left:71px;top:112.5px;font-size:4.5px;color:#555;">+</div>
<div class="a" style="left:40px;top:117.8px;width:34px;height:0.8px;background:#a8a8a8;"></div>
<div class="a" style="left:40.0px;top:117px;width:0.5px;height:0.8px;background:#c0c0c0;"></div>
<div class="a" style="left:44.8px;top:117px;width:0.5px;height:0.8px;background:#c0c0c0;"></div>
<div class="a" style="left:49.6px;top:117px;width:0.5px;height:0.8px;background:#c0c0c0;"></div>
<div class="a" style="left:54.4px;top:117px;width:0.5px;height:0.8px;background:#c0c0c0;"></div>
<div class="a" style="left:59.2px;top:117px;width:0.5px;height:0.8px;background:#c0c0c0;"></div>
<div class="a" style="left:64.0px;top:117px;width:0.5px;height:0.8px;background:#c0c0c0;"></div>
<div class="a" style="left:68.8px;top:117px;width:0.5px;height:0.8px;background:#c0c0c0;"></div>
<div class="a" style="left:73.6px;top:117px;width:0.5px;height:0.8px;background:#c0c0c0;"></div>
<svg style="left:53.3px;top:114.8px" width="7" height="7"><circle cx="3.2" cy="3.2" r="2.4" fill="#3a48e8"/><circle cx="3.2" cy="3.2" r="0.9" fill="#8a98ff"/></svg>
<div class="t" style="left:40.5px;top:125px;font-size:5px;color:#555;">L</div>
<div class="t" style="left:70.5px;top:125px;font-size:5px;color:#555;">R</div>
<div class="a" style="left:40px;top:131.2px;width:34px;height:1.2px;background:#c4c4c4;"></div>
<div class="a" style="left:40.0px;top:130.8px;width:0.5px;height:0.6px;background:#a0a0a0;"></div>
<div class="a" style="left:42.2px;top:130.8px;width:0.5px;height:0.6px;background:#a0a0a0;"></div>
<div class="a" style="left:44.4px;top:130.8px;width:0.5px;height:0.6px;background:#a0a0a0;"></div>
<div class="a" style="left:46.6px;top:130.8px;width:0.5px;height:0.6px;background:#a0a0a0;"></div>
<div class="a" style="left:48.8px;top:130.8px;width:0.5px;height:0.6px;background:#a0a0a0;"></div>
<div class="a" style="left:51.0px;top:130.8px;width:0.5px;height:0.6px;background:#a0a0a0;"></div>
<div class="a" style="left:53.2px;top:130.8px;width:0.5px;height:0.6px;background:#a0a0a0;"></div>
<div class="a" style="left:55.400000000000006px;top:130.8px;width:0.5px;height:0.6px;background:#a0a0a0;"></div>
<div class="a" style="left:57.6px;top:130.8px;width:0.5px;height:0.6px;background:#a0a0a0;"></div>
<div class="a" style="left:59.8px;top:130.8px;width:0.5px;height:0.6px;background:#a0a0a0;"></div>
<div class="a" style="left:62.0px;top:130.8px;width:0.5px;height:0.6px;background:#a0a0a0;"></div>
<div class="a" style="left:64.2px;top:130.8px;width:0.5px;height:0.6px;background:#a0a0a0;"></div>
<div class="a" style="left:66.4px;top:130.8px;width:0.5px;height:0.6px;background:#a0a0a0;"></div>
<div class="a" style="left:68.6px;top:130.8px;width:0.5px;height:0.6px;background:#a0a0a0;"></div>
<div class="a" style="left:70.80000000000001px;top:130.8px;width:0.5px;height:0.6px;background:#a0a0a0;"></div>
<div class="a" style="left:73.0px;top:130.8px;width:0.5px;height:0.6px;background:#a0a0a0;"></div>
<svg style="left:53.3px;top:128.4px" width="7" height="7"><circle cx="3.2" cy="3.2" r="2.4" fill="#3a48e8"/><circle cx="3.2" cy="3.2" r="0.9" fill="#8a98ff"/></svg>
<div class="t" style="left:36px;top:139px;font-size:4.6px;color:#2a2a2a;transform:scaleX(1.0573);">Stereo,&#160;44100Hz</div>
<div class="t" style="left:36px;top:145px;font-size:4.6px;color:#2a2a2a;transform:scaleX(1.1173);">32-bit&#160;float</div>
<div class="a" style="left:35px;top:218.8px;width:7.4px;height:7.4px;background:#dfe6f5;"></div>
<svg style="left:36.8px;top:221.4px" width="5" height="3"><path d="M0.2,2.6L2.2,0.2L4.2,2.6Z" fill="#111"/></svg>
<div class="a" style="left:42.4px;top:218.8px;width:0.7px;height:7.4px;background:#c8ccd8;"></div>
<div class="a" style="left:43px;top:218.8px;width:26.4px;height:7.4px;background:#dae2f3;"></div>
<div class="a" style="left:69.4px;top:218.8px;width:0.6px;height:7.4px;background:#c8ccd8;"></div>
<div class="t" style="left:49.9px;top:222px;font-size:4.8px;color:#444;transform:scaleX(1.0344);">Select</div>
<div class="t" style="left:82.7px;top:96px;font-size:5.8px;color:#1a1a1a;font-weight:bold;transform:scaleX(1.1783);">1.0</div>
<div class="t" style="left:82.7px;top:109px;font-size:5.8px;color:#3a3a3a;transform:scaleX(1.1783);">0.5</div>
<div class="a" style="left:92.4px;top:110.2px;width:1.6px;height:0.7px;background:#666;"></div>
<div class="t" style="left:82.7px;top:125px;font-size:5.8px;color:#1a1a1a;font-weight:bold;transform:scaleX(1.1783);">0.0</div>
<div class="a" style="left:92.4px;top:126.1px;width:1.6px;height:0.7px;background:#666;"></div>
<div class="t" style="left:81.2px;top:141px;font-size:5.8px;color:#3a3a3a;transform:scaleX(1.1006);">-0.5</div>
<div class="a" style="left:92.4px;top:142.2px;width:1.6px;height:0.7px;background:#666;"></div>
<div class="t" style="left:81.2px;top:153px;font-size:5.8px;color:#1a1a1a;font-weight:bold;transform:scaleX(1.1006);">-1.0</div>
<div class="t" style="left:82.7px;top:164px;font-size:5.8px;color:#1a1a1a;font-weight:bold;transform:scaleX(1.1783);">1.0</div>
<div class="t" style="left:82.7px;top:177px;font-size:5.8px;color:#3a3a3a;transform:scaleX(1.1783);">0.5</div>
<div class="a" style="left:92.4px;top:177.9px;width:1.6px;height:0.7px;background:#666;"></div>
<div class="t" style="left:82.7px;top:192px;font-size:5.8px;color:#1a1a1a;font-weight:bold;transform:scaleX(1.1783);">0.0</div>
<div class="a" style="left:92.4px;top:193.6px;width:1.6px;height:0.7px;background:#666;"></div>
<div class="t" style="left:81.2px;top:209px;font-size:5.8px;color:#3a3a3a;transform:scaleX(1.1006);">-0.5</div>
<div class="a" style="left:92.4px;top:210.0px;width:1.6px;height:0.7px;background:#666;"></div>
<div class="t" style="left:81.2px;top:221px;font-size:5.8px;color:#1a1a1a;font-weight:bold;transform:scaleX(1.1006);">-1.0</div>
<svg style="left:0;top:126.2px" width="825" height="1"><path d="M94.0,-0.7 L94.6,-0.6 L95.2,-0.6 L95.8,-0.9 L96.4,-1.0 L97.0,-0.9 L97.6,-1.2 L98.2,-0.8 L98.8,-0.9 L99.4,-1.5 L100.0,-1.3 L100.6,-0.8 L101.2,-1.2 L101.8,-1.1 L102.4,-1.1 L103.0,-0.9 L103.6,-0.9 L104.2,-0.6 L104.8,-0.6 L105.4,-0.9 L106.0,-1.1 L106.6,-1.0 L107.2,-1.2 L107.8,-1.1 L108.4,-1.1 L109.0,-0.9 L109.6,-3.1 L110.2,-5.5 L110.8,-7.9 L111.4,-13.8 L112.0,-14.5 L112.6,-20.5 L113.2,-24.9 L113.8,-30.0 L114.4,-32.0 L115.0,-32.0 L115.6,-32.0 L116.2,-27.3 L116.8,-15.1 L117.4,-11.2 L118.0,-9.1 L118.6,-9.7 L119.2,-9.0 L119.8,-11.9 L120.4,-15.8 L121.0,-27.4 L121.6,-22.3 L122.2,-22.1 L122.8,-27.4 L123.4,-24.2 L124.0,-28.6 L124.6,-23.6 L125.2,-14.7 L125.8,-11.0 L126.4,-6.8 L127.0,-8.9 L127.6,-7.7 L128.2,-10.5 L128.8,-11.6 L129.4,-12.9 L130.0,-12.3 L130.6,-19.6 L131.2,-24.7 L131.8,-18.8 L132.4,-13.8 L133.0,-13.8 L133.6,-10.7 L134.2,-8.8 L134.8,-7.2 L135.4,-5.3 L136.0,-7.1 L136.6,-9.1 L137.2,-7.9 L137.8,-12.7 L138.4,-15.7 L139.0,-12.0 L139.6,-12.1 L140.2,-9.8 L140.8,-7.4 L141.4,-4.3 L142.0,-2.1 L142.6,-3.6 L143.2,-3.3 L143.8,-3.9 L144.4,-3.4 L145.0,-3.0 L145.6,-3.4 L146.2,-4.6 L146.8,-5.1 L147.4,-5.6 L148.0,-6.6 L148.6,-8.8 L149.2,-10.5 L149.8,-13.1 L150.4,-14.0 L151.0,-18.8 L151.6,-18.4 L152.2,-16.6 L152.8,-17.5 L153.4,-25.0 L154.0,-21.3 L154.6,-22.8 L155.2,-26.2 L155.8,-32.0 L156.4,-30.2 L157.0,-32.0 L157.6,-32.0 L158.2,-32.0 L158.8,-32.0 L159.4,-32.0 L160.0,-31.7 L160.6,-32.0 L161.2,-32.0 L161.8,-32.0 L162.4,-32.0 L163.0,-30.9 L163.6,-31.2 L164.2,-32.0 L164.8,-22.1 L165.4,-17.7 L166.0,-13.3 L166.6,-10.0 L167.2,-6.3 L167.8,-4.0 L168.4,-6.9 L169.0,-7.4 L169.6,-13.1 L170.2,-14.2 L170.8,-19.2 L171.4,-18.2 L172.0,-14.3 L172.6,-12.0 L173.2,-7.5 L173.8,-5.4 L174.4,-4.8 L175.0,-4.9 L175.6,-2.8 L176.2,-2.2 L176.8,-1.6 L177.4,-1.7 L178.0,-1.1 L178.6,-1.2 L179.2,-1.0 L179.8,-1.1 L180.4,-0.8 L181.0,-1.0 L181.6,-1.5 L182.2,-1.6 L182.8,-1.7 L183.4,-1.4 L184.0,-1.7 L184.6,-1.6 L185.2,-1.3 L185.8,-1.6 L186.4,-1.5 L187.0,-0.8 L187.6,-0.9 L188.2,-1.4 L188.8,-1.3 L189.4,-1.5 L190.0,-1.4 L190.6,-1.0 L191.2,-1.5 L191.8,-1.7 L192.4,-1.3 L193.0,-1.4 L193.6,-0.9 L194.2,-5.8 L194.8,-17.1 L195.4,-32.0 L196.0,-32.0 L196.6,-31.9 L197.2,-32.0 L197.8,-32.0 L198.4,-32.0 L199.0,-32.0 L199.6,-22.4 L200.2,-12.4 L200.8,-10.1 L201.4,-9.6 L202.0,-6.1 L202.6,-9.6 L203.2,-26.7 L203.8,-32.0 L204.4,-32.0 L205.0,-32.0 L205.6,-32.0 L206.2,-20.0 L206.8,-9.7 L207.4,-11.2 L208.0,-10.4 L208.6,-13.4 L209.2,-13.4 L209.8,-15.6 L210.4,-19.8 L211.0,-21.9 L211.6,-22.6 L212.2,-16.3 L212.8,-19.3 L213.4,-13.3 L214.0,-11.5 L214.6,-14.5 L215.2,-13.2 L215.8,-8.5 L216.4,-8.3 L217.0,-7.0 L217.6,-7.4 L218.2,-9.2 L218.8,-15.3 L219.4,-23.9 L220.0,-32.0 L220.6,-32.0 L221.2,-32.0 L221.8,-30.3 L222.4,-32.0 L223.0,-30.0 L223.6,-32.0 L224.2,-32.0 L224.8,-32.0 L225.4,-32.0 L226.0,-27.2 L226.6,-23.9 L227.2,-15.9 L227.8,-10.5 L228.4,-9.8 L229.0,-12.2 L229.6,-12.3 L230.2,-11.6 L230.8,-12.9 L231.4,-7.9 L232.0,-6.1 L232.6,-12.4 L233.2,-21.4 L233.8,-22.7 L234.4,-32.0 L235.0,-32.0 L235.6,-32.0 L236.2,-32.0 L236.8,-32.0 L237.4,-32.0 L238.0,-32.0 L238.6,-26.4 L239.2,-17.4 L239.8,-17.2 L240.4,-17.0 L241.0,-11.9 L241.6,-11.4 L242.2,-9.3 L242.8,-8.0 L243.4,-8.4 L244.0,-10.2 L244.6,-9.2 L245.2,-6.1 L245.8,-9.2 L246.4,-10.2 L247.0,-10.9 L247.6,-8.3 L248.2,-10.1 L248.8,-14.2 L249.4,-23.5 L250.0,-16.3 L250.6,-12.6 L251.2,-10.3 L251.8,-5.8 L252.4,-9.4 L253.0,-13.9 L253.6,-20.4 L254.2,-24.7 L254.8,-18.8 L255.4,-15.2 L256.0,-15.1 L256.6,-15.6 L257.2,-15.8 L257.8,-10.9 L258.4,-14.5 L259.0,-12.8 L259.6,-14.7 L260.2,-11.1 L260.8,-13.6 L261.4,-11.5 L262.0,-11.3 L262.6,-11.5 L263.2,-11.6 L263.8,-11.5 L264.4,-9.8 L265.0,-10.7 L265.6,-7.7 L266.2,-10.1 L266.8,-12.0 L267.4,-12.2 L268.0,-12.0 L268.6,-10.8 L269.2,-9.8 L269.8,-9.0 L270.4,-10.6 L271.0,-8.0 L271.6,-7.0 L272.2,-8.3 L272.8,-6.4 L273.4,-7.2 L274.0,-8.2 L274.6,-9.5 L275.2,-10.1 L275.8,-10.2 L276.4,-12.2 L277.0,-15.7 L277.6,-11.4 L278.2,-16.3 L278.8,-11.7 L279.4,-10.0 L280.0,-8.0 L280.6,-10.0 L281.2,-8.6 L281.8,-5.5 L282.4,-7.4 L283.0,-5.0 L283.6,-5.2 L284.2,-4.3 L284.8,-4.6 L285.4,-3.2 L286.0,-1.3 L286.6,-1.3 L287.2,-2.2 L287.8,-1.8 L288.4,-1.9 L289.0,-2.0 L289.6,-2.0 L290.2,-2.5 L290.8,-2.0 L291.4,-1.9 L292.0,-2.1 L292.6,-1.4 L293.2,-2.1 L293.8,-1.9 L294.4,-4.5 L295.0,-7.1 L295.6,-12.2 L296.2,-18.7 L296.8,-27.6 L297.4,-32.0 L298.0,-32.0 L298.6,-19.1 L299.2,-13.1 L299.8,-8.5 L300.4,-8.6 L301.0,-7.4 L301.6,-5.6 L302.2,-4.3 L302.8,-3.0 L303.4,-2.8 L304.0,-2.8 L304.6,-6.2 L305.2,-9.6 L305.8,-13.6 L306.4,-26.6 L307.0,-30.0 L307.6,-32.0 L308.2,-32.0 L308.8,-17.7 L309.4,-12.6 L310.0,-9.1 L310.6,-7.7 L311.2,-6.1 L311.8,-4.9 L312.4,-5.6 L313.0,-3.6 L313.6,-3.3 L314.2,-2.0 L314.8,-1.4 L315.4,-1.8 L316.0,-1.1 L316.6,-1.7 L317.2,-1.2 L317.8,-1.7 L318.4,-1.3 L319.0,-1.9 L319.6,-0.9 L320.2,-1.4 L320.8,-1.1 L321.4,-0.9 L322.0,-1.5 L322.6,-1.1 L323.2,-1.7 L323.8,-1.6 L324.4,-1.9 L325.0,-1.2 L325.6,-2.4 L326.2,-2.1 L326.8,-3.5 L327.4,-3.8 L328.0,-2.5 L328.6,-1.9 L329.2,-1.0 L329.8,-1.5 L330.4,-0.7 L331.0,-0.7 L331.6,-0.9 L332.2,-0.8 L332.8,-0.5 L333.4,-0.7 L334.0,-0.7 L334.6,-0.4 L335.2,-0.7 L335.8,-0.7 L336.4,-0.4 L337.0,-0.4 L337.6,-0.4 L338.2,-0.7 L338.8,-0.8 L339.4,-0.6 L340.0,-0.5 L340.6,-0.6 L341.2,-0.7 L341.8,-0.4 L342.4,-0.7 L343.0,-0.6 L343.6,-0.4 L344.2,-0.7 L344.8,-0.5 L345.4,-0.6 L346.0,-0.4 L346.6,-0.7 L347.2,-0.5 L347.8,-0.4 L348.4,-0.4 L349.0,-0.6 L349.6,-0.5 L350.2,-0.7 L350.8,-0.5 L351.4,-0.7 L352.0,-0.4 L352.6,-0.6 L353.2,-0.7 L353.8,-0.5 L354.4,-0.4 L355.0,-0.5 L355.6,-0.5 L356.2,-0.7 L356.8,-0.4 L357.4,-0.7 L358.0,-0.4 L358.6,-0.4 L359.2,-0.5 L359.8,-0.6 L360.4,-0.4 L361.0,-0.7 L361.6,-0.6 L362.2,-0.4 L362.8,-0.7 L363.4,-0.6 L364.0,-0.5 L364.6,-0.5 L365.2,-0.6 L365.8,-0.5 L366.4,-0.6 L367.0,-0.6 L367.6,-0.6 L368.2,-0.6 L368.8,-0.7 L369.4,-0.6 L370.0,-0.6 L370.6,-0.6 L371.2,-0.4 L371.8,-0.7 L372.4,-0.5 L373.0,-0.5 L373.6,-0.5 L374.2,-0.5 L374.8,-0.7 L375.4,-0.7 L376.0,-0.4 L376.6,-0.6 L377.2,-0.4 L377.8,-0.6 L378.4,-0.5 L379.0,-0.4 L379.6,-0.7 L380.2,-0.5 L380.8,-0.4 L381.4,-0.5 L382.0,-0.5 L382.6,-0.5 L383.2,-0.4 L383.8,-0.7 L384.4,-0.6 L385.0,-0.8 L385.6,-0.4 L386.2,-0.7 L386.8,-0.7 L387.4,-0.7 L388.0,-0.6 L388.6,-0.7 L389.2,-0.6 L389.8,-0.7 L390.4,-0.5 L391.0,-0.4 L391.6,-0.6 L392.2,-0.7 L392.8,-0.5 L393.4,-0.7 L394.0,-0.8 L394.6,-0.6 L395.2,-0.6 L395.8,-0.8 L396.4,-0.7 L397.0,-0.6 L397.6,-0.5 L398.2,-0.7 L398.8,-0.5 L399.4,-0.5 L400.0,-0.6 L400.6,-0.8 L401.2,-0.5 L401.8,-0.6 L402.4,-0.4 L403.0,-0.6 L403.6,-0.4 L404.2,-0.6 L404.8,-0.7 L405.4,-0.6 L406.0,-0.6 L406.6,-0.5 L407.2,-0.4 L407.8,-0.7 L408.4,-0.7 L409.0,-0.5 L409.6,-0.5 L410.2,-0.7 L410.8,-0.4 L411.4,-0.6 L412.0,-0.4 L412.6,-0.7 L413.2,-0.5 L413.8,-0.4 L414.4,-0.4 L415.0,-0.8 L415.6,-0.4 L416.2,-0.5 L416.8,-0.4 L417.4,-0.7 L418.0,-0.6 L418.6,-0.7 L419.2,-0.7 L419.8,-0.6 L420.4,-0.5 L421.0,-0.7 L421.6,-0.5 L422.2,-0.6 L422.8,-0.5 L423.4,-0.5 L424.0,-0.8 L424.6,-0.5 L425.2,-0.6 L425.8,-0.6 L426.4,-0.6 L427.0,-0.7 L427.6,-0.7 L428.2,-0.7 L428.8,-0.9 L429.4,-1.3 L430.0,-1.4 L430.6,-0.9 L431.2,-1.1 L431.8,-0.6 L432.4,-0.7 L433.0,-0.6 L433.6,-0.7 L434.2,-0.8 L434.8,-0.5 L435.4,-0.5 L436.0,-0.8 L436.6,-0.6 L437.2,-0.4 L437.8,-0.5 L437.8,0.5 L437.2,0.6 L436.6,0.4 L436.0,0.6 L435.4,0.7 L434.8,0.8 L434.2,0.9 L433.6,0.6 L433.0,0.8 L432.4,1.0 L431.8,1.0 L431.2,1.3 L430.6,1.4 L430.0,1.5 L429.4,0.7 L428.8,1.0 L428.2,0.5 L427.6,0.9 L427.0,0.5 L426.4,0.5 L425.8,0.8 L425.2,0.7 L424.6,0.4 L424.0,0.7 L423.4,0.5 L422.8,0.6 L422.2,0.4 L421.6,0.6 L421.0,0.6 L420.4,0.7 L419.8,0.7 L419.2,0.4 L418.6,0.5 L418.0,0.7 L417.4,0.7 L416.8,0.7 L416.2,0.7 L415.6,0.4 L415.0,0.4 L414.4,0.6 L413.8,0.4 L413.2,0.4 L412.6,0.8 L412.0,0.5 L411.4,0.7 L410.8,0.4 L410.2,0.4 L409.6,0.5 L409.0,0.5 L408.4,0.7 L407.8,0.6 L407.2,0.4 L406.6,0.7 L406.0,0.4 L405.4,0.6 L404.8,0.6 L404.2,0.6 L403.6,0.4 L403.0,0.4 L402.4,0.7 L401.8,0.6 L401.2,0.5 L400.6,0.6 L400.0,0.5 L399.4,0.7 L398.8,0.6 L398.2,0.4 L397.6,0.6 L397.0,0.5 L396.4,0.4 L395.8,0.6 L395.2,0.7 L394.6,0.4 L394.0,0.4 L393.4,0.5 L392.8,0.6 L392.2,0.4 L391.6,0.6 L391.0,0.5 L390.4,0.4 L389.8,0.6 L389.2,0.7 L388.6,0.4 L388.0,0.7 L387.4,0.6 L386.8,0.7 L386.2,0.5 L385.6,0.4 L385.0,0.6 L384.4,0.4 L383.8,0.4 L383.2,0.7 L382.6,0.7 L382.0,0.6 L381.4,0.5 L380.8,0.7 L380.2,0.5 L379.6,0.5 L379.0,0.7 L378.4,0.5 L377.8,0.7 L377.2,0.8 L376.6,0.6 L376.0,0.7 L375.4,0.5 L374.8,0.6 L374.2,0.4 L373.6,0.6 L373.0,0.4 L372.4,0.4 L371.8,0.4 L371.2,0.6 L370.6,0.5 L370.0,0.6 L369.4,0.6 L368.8,0.6 L368.2,0.4 L367.6,0.8 L367.0,0.7 L366.4,0.7 L365.8,0.6 L365.2,0.5 L364.6,0.7 L364.0,0.6 L363.4,0.6 L362.8,0.6 L362.2,0.7 L361.6,0.7 L361.0,0.7 L360.4,0.6 L359.8,0.6 L359.2,0.7 L358.6,0.5 L358.0,0.6 L357.4,0.7 L356.8,0.5 L356.2,0.4 L355.6,0.4 L355.0,0.6 L354.4,0.4 L353.8,0.6 L353.2,0.5 L352.6,0.4 L352.0,0.5 L351.4,0.6 L350.8,0.5 L350.2,0.7 L349.6,0.5 L349.0,0.5 L348.4,0.5 L347.8,0.7 L347.2,0.5 L346.6,0.6 L346.0,0.7 L345.4,0.4 L344.8,0.4 L344.2,0.5 L343.6,0.6 L343.0,0.6 L342.4,0.8 L341.8,0.4 L341.2,0.4 L340.6,0.6 L340.0,0.7 L339.4,0.4 L338.8,0.6 L338.2,0.5 L337.6,0.5 L337.0,0.5 L336.4,0.4 L335.8,0.6 L335.2,0.7 L334.6,0.4 L334.0,0.8 L333.4,0.4 L332.8,0.7 L332.2,0.5 L331.6,0.9 L331.0,0.6 L330.4,1.4 L329.8,0.8 L329.2,1.4 L328.6,1.7 L328.0,2.8 L327.4,3.1 L326.8,3.6 L326.2,2.0 L325.6,1.7 L325.0,1.8 L324.4,0.9 L323.8,1.9 L323.2,1.4 L322.6,1.4 L322.0,1.6 L321.4,1.2 L320.8,1.0 L320.2,1.7 L319.6,1.8 L319.0,1.8 L318.4,1.3 L317.8,1.9 L317.2,1.7 L316.6,2.2 L316.0,2.0 L315.4,1.6 L314.8,2.3 L314.2,2.8 L313.6,3.0 L313.0,3.2 L312.4,5.4 L311.8,4.8 L311.2,8.7 L310.6,9.3 L310.0,10.7 L309.4,11.2 L308.8,13.2 L308.2,23.5 L307.6,32.0 L307.0,30.5 L306.4,27.5 L305.8,16.2 L305.2,7.0 L304.6,5.4 L304.0,2.2 L303.4,3.4 L302.8,4.4 L302.2,4.4 L301.6,5.0 L301.0,5.5 L300.4,9.3 L299.8,8.4 L299.2,12.0 L298.6,14.1 L298.0,27.7 L297.4,32.0 L296.8,31.9 L296.2,24.7 L295.6,14.6 L295.0,5.4 L294.4,4.7 L293.8,2.7 L293.2,1.4 L292.6,2.4 L292.0,1.3 L291.4,1.4 L290.8,1.4 L290.2,2.0 L289.6,1.6 L289.0,1.3 L288.4,2.3 L287.8,1.9 L287.2,2.1 L286.6,2.6 L286.0,2.1 L285.4,3.9 L284.8,4.3 L284.2,4.4 L283.6,6.3 L283.0,6.6 L282.4,6.7 L281.8,8.0 L281.2,8.7 L280.6,7.2 L280.0,9.6 L279.4,11.1 L278.8,12.4 L278.2,11.3 L277.6,14.7 L277.0,13.3 L276.4,14.3 L275.8,9.1 L275.2,9.3 L274.6,11.4 L274.0,9.2 L273.4,7.3 L272.8,8.2 L272.2,8.6 L271.6,7.2 L271.0,10.4 L270.4,8.5 L269.8,8.2 L269.2,11.4 L268.6,9.7 L268.0,12.1 L267.4,13.0 L266.8,10.1 L266.2,11.6 L265.6,8.0 L265.0,7.3 L264.4,11.3 L263.8,13.1 L263.2,10.2 L262.6,11.9 L262.0,15.5 L261.4,11.8 L260.8,12.5 L260.2,15.2 L259.6,15.2 L259.0,13.9 L258.4,12.9 L257.8,10.9 L257.2,16.4 L256.6,14.1 L256.0,13.7 L255.4,16.2 L254.8,19.1 L254.2,23.1 L253.6,19.9 L253.0,16.6 L252.4,8.9 L251.8,7.1 L251.2,6.8 L250.6,13.4 L250.0,15.9 L249.4,20.1 L248.8,13.8 L248.2,12.6 L247.6,8.5 L247.0,10.7 L246.4,6.9 L245.8,6.8 L245.2,7.5 L244.6,9.2 L244.0,7.4 L243.4,10.7 L242.8,7.4 L242.2,9.3 L241.6,8.2 L241.0,11.1 L240.4,18.8 L239.8,21.2 L239.2,16.6 L238.6,24.2 L238.0,32.0 L237.4,32.0 L236.8,32.0 L236.2,32.0 L235.6,32.0 L235.0,32.0 L234.4,32.0 L233.8,26.4 L233.2,23.7 L232.6,11.1 L232.0,5.2 L231.4,10.6 L230.8,10.9 L230.2,14.1 L229.6,9.3 L229.0,11.2 L228.4,9.6 L227.8,12.5 L227.2,13.7 L226.6,18.8 L226.0,28.3 L225.4,32.0 L224.8,32.0 L224.2,31.8 L223.6,32.0 L223.0,32.0 L222.4,32.0 L221.8,30.5 L221.2,32.0 L220.6,32.0 L220.0,32.0 L219.4,28.6 L218.8,17.0 L218.2,8.6 L217.6,6.4 L217.0,8.0 L216.4,7.4 L215.8,8.8 L215.2,13.6 L214.6,12.3 L214.0,11.5 L213.4,14.9 L212.8,14.3 L212.2,16.0 L211.6,16.0 L211.0,18.7 L210.4,17.6 L209.8,16.8 L209.2,14.9 L208.6,13.1 L208.0,8.9 L207.4,8.4 L206.8,13.5 L206.2,18.6 L205.6,30.6 L205.0,32.0 L204.4,32.0 L203.8,32.0 L203.2,32.0 L202.6,8.8 L202.0,7.7 L201.4,8.1 L200.8,9.4 L200.2,16.8 L199.6,26.8 L199.0,32.0 L198.4,32.0 L197.8,32.0 L197.2,32.0 L196.6,32.0 L196.0,32.0 L195.4,32.0 L194.8,19.0 L194.2,6.6 L193.6,1.0 L193.0,1.4 L192.4,1.5 L191.8,1.3 L191.2,1.0 L190.6,0.9 L190.0,0.9 L189.4,1.3 L188.8,0.8 L188.2,1.4 L187.6,1.6 L187.0,0.9 L186.4,1.5 L185.8,1.4 L185.2,1.6 L184.6,0.9 L184.0,1.4 L183.4,0.8 L182.8,0.9 L182.2,1.2 L181.6,1.4 L181.0,1.4 L180.4,0.8 L179.8,0.9 L179.2,1.3 L178.6,1.3 L178.0,1.1 L177.4,1.3 L176.8,2.6 L176.2,1.7 L175.6,2.8 L175.0,4.9 L174.4,4.6 L173.8,5.2 L173.2,7.3 L172.6,11.4 L172.0,15.9 L171.4,15.1 L170.8,16.3 L170.2,17.1 L169.6,12.1 L169.0,8.4 L168.4,5.9 L167.8,4.9 L167.2,6.9 L166.6,9.4 L166.0,12.4 L165.4,19.5 L164.8,31.6 L164.2,29.1 L163.6,32.0 L163.0,32.0 L162.4,32.0 L161.8,32.0 L161.2,32.0 L160.6,32.0 L160.0,32.0 L159.4,32.0 L158.8,32.0 L158.2,30.3 L157.6,30.3 L157.0,32.0 L156.4,32.0 L155.8,32.0 L155.2,32.0 L154.6,31.5 L154.0,27.4 L153.4,26.1 L152.8,19.1 L152.2,16.5 L151.6,21.4 L151.0,19.3 L150.4,16.8 L149.8,11.8 L149.2,10.0 L148.6,9.4 L148.0,5.9 L147.4,4.8 L146.8,5.6 L146.2,4.1 L145.6,4.0 L145.0,2.8 L144.4,2.7 L143.8,3.3 L143.2,3.7 L142.6,2.9 L142.0,2.4 L141.4,4.2 L140.8,5.7 L140.2,8.0 L139.6,10.7 L139.0,9.9 L138.4,13.8 L137.8,9.5 L137.2,8.0 L136.6,8.4 L136.0,5.6 L135.4,4.4 L134.8,6.4 L134.2,9.7 L133.6,11.3 L133.0,13.5 L132.4,13.9 L131.8,17.6 L131.2,25.2 L130.6,21.7 L130.0,14.0 L129.4,12.0 L128.8,11.2 L128.2,10.0 L127.6,7.3 L127.0,8.1 L126.4,7.2 L125.8,10.6 L125.2,11.5 L124.6,20.0 L124.0,21.3 L123.4,27.2 L122.8,27.6 L122.2,30.4 L121.6,23.3 L121.0,24.7 L120.4,18.0 L119.8,11.5 L119.2,8.8 L118.6,7.4 L118.0,9.1 L117.4,11.6 L116.8,11.3 L116.2,25.4 L115.6,32.0 L115.0,30.0 L114.4,32.0 L113.8,30.4 L113.2,30.9 L112.6,16.0 L112.0,16.6 L111.4,9.7 L110.8,8.4 L110.2,5.4 L109.6,3.9 L109.0,0.9 L108.4,1.4 L107.8,0.6 L107.2,1.2 L106.6,1.0 L106.0,0.7 L105.4,1.0 L104.8,0.8 L104.2,0.7 L103.6,0.7 L103.0,0.9 L102.4,1.1 L101.8,1.0 L101.2,1.0 L100.6,0.7 L100.0,1.1 L99.4,0.9 L98.8,0.9 L98.2,1.5 L97.6,1.0 L97.0,1.2 L96.4,1.3 L95.8,0.6 L95.2,0.9 L94.6,0.9 L94.0,0.6Z" fill="#3232c8"/><path d="M94.0,-0.3 L94.6,-0.3 L95.2,-0.3 L95.8,-0.3 L96.4,-0.4 L97.0,-0.5 L97.6,-0.6 L98.2,-0.5 L98.8,-0.5 L99.4,-0.5 L100.0,-0.5 L100.6,-0.4 L101.2,-0.4 L101.8,-0.4 L102.4,-0.4 L103.0,-0.4 L103.6,-0.4 L104.2,-0.4 L104.8,-0.3 L105.4,-0.4 L106.0,-0.4 L106.6,-0.4 L107.2,-0.4 L107.8,-0.4 L108.4,-0.5 L109.0,-0.5 L109.6,-1.2 L110.2,-2.7 L110.8,-3.3 L111.4,-4.2 L112.0,-5.8 L112.6,-6.2 L113.2,-11.3 L113.8,-11.5 L114.4,-14.3 L115.0,-13.4 L115.6,-15.4 L116.2,-9.5 L116.8,-5.8 L117.4,-4.0 L118.0,-2.9 L118.6,-2.8 L119.2,-3.5 L119.8,-4.6 L120.4,-5.7 L121.0,-7.4 L121.6,-8.6 L122.2,-11.3 L122.8,-8.5 L123.4,-9.6 L124.0,-7.4 L124.6,-6.2 L125.2,-5.3 L125.8,-3.5 L126.4,-2.4 L127.0,-3.2 L127.6,-3.4 L128.2,-3.5 L128.8,-3.3 L129.4,-3.8 L130.0,-5.1 L130.6,-6.4 L131.2,-8.8 L131.8,-6.5 L132.4,-6.0 L133.0,-4.2 L133.6,-3.1 L134.2,-3.3 L134.8,-2.1 L135.4,-1.9 L136.0,-2.1 L136.6,-2.4 L137.2,-3.9 L137.8,-4.5 L138.4,-4.4 L139.0,-3.5 L139.6,-3.7 L140.2,-3.4 L140.8,-2.1 L141.4,-1.8 L142.0,-0.9 L142.6,-1.1 L143.2,-1.1 L143.8,-1.2 L144.4,-1.2 L145.0,-1.4 L145.6,-1.6 L146.2,-1.6 L146.8,-1.5 L147.4,-1.8 L148.0,-2.2 L148.6,-2.8 L149.2,-3.6 L149.8,-4.4 L150.4,-5.5 L151.0,-5.3 L151.6,-7.3 L152.2,-7.0 L152.8,-6.5 L153.4,-9.7 L154.0,-9.6 L154.6,-11.5 L155.2,-10.4 L155.8,-13.3 L156.4,-12.9 L157.0,-12.9 L157.6,-14.1 L158.2,-13.0 L158.8,-11.6 L159.4,-16.3 L160.0,-11.4 L160.6,-11.9 L161.2,-15.5 L161.8,-16.0 L162.4,-11.7 L163.0,-13.5 L163.6,-14.6 L164.2,-14.6 L164.8,-9.7 L165.4,-8.0 L166.0,-5.4 L166.6,-3.6 L167.2,-2.6 L167.8,-1.5 L168.4,-2.4 L169.0,-2.8 L169.6,-3.8 L170.2,-4.4 L170.8,-6.1 L171.4,-5.8 L172.0,-4.5 L172.6,-4.0 L173.2,-2.3 L173.8,-2.5 L174.4,-1.6 L175.0,-1.6 L175.6,-1.0 L176.2,-0.9 L176.8,-1.0 L177.4,-0.8 L178.0,-0.4 L178.6,-0.5 L179.2,-0.4 L179.8,-0.5 L180.4,-0.5 L181.0,-0.5 L181.6,-0.6 L182.2,-0.5 L182.8,-0.6 L183.4,-0.6 L184.0,-0.6 L184.6,-0.5 L185.2,-0.6 L185.8,-0.6 L186.4,-0.5 L187.0,-0.5 L187.6,-0.5 L188.2,-0.6 L188.8,-0.6 L189.4,-0.5 L190.0,-0.6 L190.6,-0.5 L191.2,-0.6 L191.8,-0.5 L192.4,-0.6 L193.0,-0.4 L193.6,-0.6 L194.2,-1.9 L194.8,-8.1 L195.4,-11.9 L196.0,-13.7 L196.6,-12.3 L197.2,-11.3 L197.8,-16.3 L198.4,-12.3 L199.0,-14.3 L199.6,-11.2 L200.2,-5.3 L200.8,-2.8 L201.4,-2.4 L202.0,-2.7 L202.6,-3.6 L203.2,-8.5 L203.8,-11.9 L204.4,-16.0 L205.0,-13.3 L205.6,-10.1 L206.2,-6.2 L206.8,-3.9 L207.4,-3.1 L208.0,-3.6 L208.6,-4.5 L209.2,-5.3 L209.8,-4.6 L210.4,-7.1 L211.0,-6.2 L211.6,-6.8 L212.2,-6.9 L212.8,-6.1 L213.4,-5.1 L214.0,-4.3 L214.6,-4.0 L215.2,-4.0 L215.8,-3.1 L216.4,-2.9 L217.0,-3.2 L217.6,-2.3 L218.2,-3.1 L218.8,-8.0 L219.4,-10.8 L220.0,-12.7 L220.6,-13.6 L221.2,-15.8 L221.8,-15.0 L222.4,-14.3 L223.0,-16.1 L223.6,-16.3 L224.2,-12.0 L224.8,-16.2 L225.4,-13.6 L226.0,-8.3 L226.6,-8.9 L227.2,-4.7 L227.8,-4.6 L228.4,-4.3 L229.0,-3.8 L229.6,-3.9 L230.2,-4.5 L230.8,-3.6 L231.4,-3.4 L232.0,-2.4 L232.6,-3.8 L233.2,-6.5 L233.8,-10.0 L234.4,-14.8 L235.0,-12.3 L235.6,-15.5 L236.2,-15.2 L236.8,-13.8 L237.4,-13.4 L238.0,-10.9 L238.6,-11.8 L239.2,-6.2 L239.8,-7.5 L240.4,-6.5 L241.0,-5.4 L241.6,-4.0 L242.2,-3.3 L242.8,-3.1 L243.4,-2.8 L244.0,-2.9 L244.6,-2.8 L245.2,-2.6 L245.8,-2.7 L246.4,-3.0 L247.0,-2.9 L247.6,-4.4 L248.2,-4.7 L248.8,-6.5 L249.4,-8.8 L250.0,-5.2 L250.6,-4.3 L251.2,-2.8 L251.8,-2.5 L252.4,-3.5 L253.0,-4.5 L253.6,-7.3 L254.2,-7.5 L254.8,-8.2 L255.4,-7.4 L256.0,-5.1 L256.6,-6.5 L257.2,-4.5 L257.8,-4.8 L258.4,-4.3 L259.0,-5.1 L259.6,-5.1 L260.2,-4.4 L260.8,-5.2 L261.4,-4.3 L262.0,-4.9 L262.6,-5.3 L263.2,-4.7 L263.8,-3.3 L264.4,-4.1 L265.0,-3.0 L265.6,-3.9 L266.2,-3.4 L266.8,-3.4 L267.4,-3.4 L268.0,-3.7 L268.6,-3.7 L269.2,-4.2 L269.8,-3.5 L270.4,-3.3 L271.0,-3.4 L271.6,-3.0 L272.2,-2.5 L272.8,-2.6 L273.4,-3.4 L274.0,-3.0 L274.6,-4.2 L275.2,-4.2 L275.8,-4.9 L276.4,-4.4 L277.0,-4.3 L277.6,-5.5 L278.2,-5.2 L278.8,-3.9 L279.4,-4.6 L280.0,-3.9 L280.6,-2.6 L281.2,-2.6 L281.8,-2.3 L282.4,-2.6 L283.0,-1.9 L283.6,-2.2 L284.2,-1.7 L284.8,-1.4 L285.4,-1.5 L286.0,-0.9 L286.6,-0.7 L287.2,-0.9 L287.8,-0.9 L288.4,-0.8 L289.0,-0.9 L289.6,-0.9 L290.2,-0.7 L290.8,-0.7 L291.4,-0.8 L292.0,-0.9 L292.6,-0.9 L293.2,-0.9 L293.8,-0.7 L294.4,-1.5 L295.0,-2.7 L295.6,-5.1 L296.2,-9.2 L296.8,-13.5 L297.4,-12.7 L298.0,-11.9 L298.6,-5.3 L299.2,-3.9 L299.8,-4.2 L300.4,-2.5 L301.0,-2.4 L301.6,-2.2 L302.2,-1.7 L302.8,-1.4 L303.4,-1.0 L304.0,-0.8 L304.6,-1.8 L305.2,-3.5 L305.8,-6.5 L306.4,-8.6 L307.0,-12.0 L307.6,-13.9 L308.2,-9.1 L308.8,-4.9 L309.4,-4.6 L310.0,-3.9 L310.6,-3.2 L311.2,-2.4 L311.8,-2.2 L312.4,-1.7 L313.0,-1.5 L313.6,-1.2 L314.2,-1.0 L314.8,-0.6 L315.4,-0.6 L316.0,-0.6 L316.6,-0.6 L317.2,-0.7 L317.8,-0.6 L318.4,-0.5 L319.0,-0.7 L319.6,-0.7 L320.2,-0.6 L320.8,-0.5 L321.4,-0.6 L322.0,-0.6 L322.6,-0.5 L323.2,-0.5 L323.8,-0.5 L324.4,-0.6 L325.0,-0.7 L325.6,-1.0 L326.2,-1.2 L326.8,-1.3 L327.4,-1.3 L328.0,-0.9 L328.6,-0.6 L329.2,-0.4 L329.8,-0.4 L330.4,-0.4 L331.0,-0.3 L331.6,-0.4 L332.2,-0.3 L332.8,-0.3 L333.4,-0.3 L334.0,-0.2 L334.6,-0.2 L335.2,-0.2 L335.8,-0.2 L336.4,-0.3 L337.0,-0.2 L337.6,-0.2 L338.2,-0.2 L338.8,-0.3 L339.4,-0.2 L340.0,-0.2 L340.6,-0.2 L341.2,-0.3 L341.8,-0.2 L342.4,-0.2 L343.0,-0.3 L343.6,-0.2 L344.2,-0.3 L344.8,-0.3 L345.4,-0.2 L346.0,-0.3 L346.6,-0.2 L347.2,-0.3 L347.8,-0.2 L348.4,-0.3 L349.0,-0.3 L349.6,-0.2 L350.2,-0.2 L350.8,-0.2 L351.4,-0.3 L352.0,-0.3 L352.6,-0.2 L353.2,-0.2 L353.8,-0.3 L354.4,-0.2 L355.0,-0.2 L355.6,-0.3 L356.2,-0.3 L356.8,-0.3 L357.4,-0.2 L358.0,-0.2 L358.6,-0.2 L359.2,-0.3 L359.8,-0.2 L360.4,-0.2 L361.0,-0.2 L361.6,-0.2 L362.2,-0.3 L362.8,-0.3 L363.4,-0.2 L364.0,-0.2 L364.6,-0.3 L365.2,-0.2 L365.8,-0.2 L366.4,-0.2 L367.0,-0.2 L367.6,-0.2 L368.2,-0.3 L368.8,-0.2 L369.4,-0.3 L370.0,-0.3 L370.6,-0.3 L371.2,-0.2 L371.8,-0.3 L372.4,-0.2 L373.0,-0.2 L373.6,-0.2 L374.2,-0.3 L374.8,-0.2 L375.4,-0.2 L376.0,-0.3 L376.6,-0.2 L377.2,-0.2 L377.8,-0.3 L378.4,-0.2 L379.0,-0.2 L379.6,-0.2 L380.2,-0.2 L380.8,-0.2 L381.4,-0.2 L382.0,-0.2 L382.6,-0.3 L383.2,-0.3 L383.8,-0.3 L384.4,-0.2 L385.0,-0.2 L385.6,-0.2 L386.2,-0.2 L386.8,-0.2 L387.4,-0.3 L388.0,-0.3 L388.6,-0.3 L389.2,-0.2 L389.8,-0.2 L390.4,-0.2 L391.0,-0.2 L391.6,-0.2 L392.2,-0.3 L392.8,-0.2 L393.4,-0.2 L394.0,-0.2 L394.6,-0.2 L395.2,-0.2 L395.8,-0.2 L396.4,-0.3 L397.0,-0.3 L397.6,-0.2 L398.2,-0.2 L398.8,-0.3 L399.4,-0.2 L400.0,-0.2 L400.6,-0.3 L401.2,-0.2 L401.8,-0.3 L402.4,-0.3 L403.0,-0.2 L403.6,-0.3 L404.2,-0.3 L404.8,-0.2 L405.4,-0.2 L406.0,-0.2 L406.6,-0.2 L407.2,-0.3 L407.8,-0.2 L408.4,-0.2 L409.0,-0.2 L409.6,-0.2 L410.2,-0.2 L410.8,-0.3 L411.4,-0.2 L412.0,-0.2 L412.6,-0.2 L413.2,-0.2 L413.8,-0.2 L414.4,-0.2 L415.0,-0.3 L415.6,-0.3 L416.2,-0.2 L416.8,-0.3 L417.4,-0.2 L418.0,-0.2 L418.6,-0.3 L419.2,-0.2 L419.8,-0.2 L420.4,-0.2 L421.0,-0.2 L421.6,-0.2 L422.2,-0.3 L422.8,-0.2 L423.4,-0.3 L424.0,-0.2 L424.6,-0.3 L425.2,-0.2 L425.8,-0.3 L426.4,-0.2 L427.0,-0.3 L427.6,-0.3 L428.2,-0.3 L428.8,-0.4 L429.4,-0.5 L430.0,-0.5 L430.6,-0.5 L431.2,-0.4 L431.8,-0.4 L432.4,-0.4 L433.0,-0.3 L433.6,-0.3 L434.2,-0.3 L434.8,-0.3 L435.4,-0.3 L436.0,-0.3 L436.6,-0.2 L437.2,-0.2 L437.8,-0.2 L437.8,0.2 L437.2,0.2 L436.6,0.2 L436.0,0.3 L435.4,0.3 L434.8,0.3 L434.2,0.3 L433.6,0.3 L433.0,0.3 L432.4,0.4 L431.8,0.4 L431.2,0.4 L430.6,0.5 L430.0,0.5 L429.4,0.5 L428.8,0.4 L428.2,0.3 L427.6,0.3 L427.0,0.3 L426.4,0.2 L425.8,0.3 L425.2,0.2 L424.6,0.3 L424.0,0.2 L423.4,0.3 L422.8,0.2 L422.2,0.3 L421.6,0.2 L421.0,0.2 L420.4,0.2 L419.8,0.2 L419.2,0.2 L418.6,0.3 L418.0,0.2 L417.4,0.2 L416.8,0.3 L416.2,0.2 L415.6,0.3 L415.0,0.3 L414.4,0.2 L413.8,0.2 L413.2,0.2 L412.6,0.2 L412.0,0.2 L411.4,0.2 L410.8,0.3 L410.2,0.2 L409.6,0.2 L409.0,0.2 L408.4,0.2 L407.8,0.2 L407.2,0.3 L406.6,0.2 L406.0,0.2 L405.4,0.2 L404.8,0.2 L404.2,0.3 L403.6,0.3 L403.0,0.2 L402.4,0.3 L401.8,0.3 L401.2,0.2 L400.6,0.3 L400.0,0.2 L399.4,0.2 L398.8,0.3 L398.2,0.2 L397.6,0.2 L397.0,0.3 L396.4,0.3 L395.8,0.2 L395.2,0.2 L394.6,0.2 L394.0,0.2 L393.4,0.2 L392.8,0.2 L392.2,0.3 L391.6,0.2 L391.0,0.2 L390.4,0.2 L389.8,0.2 L389.2,0.2 L388.6,0.3 L388.0,0.3 L387.4,0.3 L386.8,0.2 L386.2,0.2 L385.6,0.2 L385.0,0.2 L384.4,0.2 L383.8,0.3 L383.2,0.3 L382.6,0.3 L382.0,0.2 L381.4,0.2 L380.8,0.2 L380.2,0.2 L379.6,0.2 L379.0,0.2 L378.4,0.2 L377.8,0.3 L377.2,0.2 L376.6,0.2 L376.0,0.3 L375.4,0.2 L374.8,0.2 L374.2,0.3 L373.6,0.2 L373.0,0.2 L372.4,0.2 L371.8,0.3 L371.2,0.2 L370.6,0.3 L370.0,0.3 L369.4,0.3 L368.8,0.2 L368.2,0.3 L367.6,0.2 L367.0,0.2 L366.4,0.2 L365.8,0.2 L365.2,0.2 L364.6,0.3 L364.0,0.2 L363.4,0.2 L362.8,0.3 L362.2,0.3 L361.6,0.2 L361.0,0.2 L360.4,0.2 L359.8,0.2 L359.2,0.3 L358.6,0.2 L358.0,0.2 L357.4,0.2 L356.8,0.3 L356.2,0.3 L355.6,0.3 L355.0,0.2 L354.4,0.2 L353.8,0.3 L353.2,0.2 L352.6,0.2 L352.0,0.3 L351.4,0.3 L350.8,0.2 L350.2,0.2 L349.6,0.2 L349.0,0.3 L348.4,0.3 L347.8,0.2 L347.2,0.3 L346.6,0.2 L346.0,0.3 L345.4,0.2 L344.8,0.3 L344.2,0.3 L343.6,0.2 L343.0,0.3 L342.4,0.2 L341.8,0.2 L341.2,0.3 L340.6,0.2 L340.0,0.2 L339.4,0.2 L338.8,0.3 L338.2,0.2 L337.6,0.2 L337.0,0.2 L336.4,0.3 L335.8,0.2 L335.2,0.2 L334.6,0.2 L334.0,0.2 L333.4,0.3 L332.8,0.3 L332.2,0.3 L331.6,0.4 L331.0,0.3 L330.4,0.4 L329.8,0.4 L329.2,0.4 L328.6,0.6 L328.0,0.9 L327.4,1.3 L326.8,1.3 L326.2,1.2 L325.6,1.0 L325.0,0.7 L324.4,0.6 L323.8,0.5 L323.2,0.5 L322.6,0.5 L322.0,0.6 L321.4,0.6 L320.8,0.5 L320.2,0.6 L319.6,0.7 L319.0,0.7 L318.4,0.5 L317.8,0.6 L317.2,0.7 L316.6,0.6 L316.0,0.6 L315.4,0.6 L314.8,0.6 L314.2,1.0 L313.6,1.2 L313.0,1.5 L312.4,1.7 L311.8,2.2 L311.2,2.4 L310.6,3.2 L310.0,3.9 L309.4,4.6 L308.8,4.9 L308.2,9.1 L307.6,13.9 L307.0,12.0 L306.4,8.6 L305.8,6.5 L305.2,3.5 L304.6,1.8 L304.0,0.8 L303.4,1.0 L302.8,1.4 L302.2,1.7 L301.6,2.2 L301.0,2.4 L300.4,2.5 L299.8,4.2 L299.2,3.9 L298.6,5.3 L298.0,11.9 L297.4,12.7 L296.8,13.5 L296.2,9.2 L295.6,5.1 L295.0,2.7 L294.4,1.5 L293.8,0.7 L293.2,0.9 L292.6,0.9 L292.0,0.9 L291.4,0.8 L290.8,0.7 L290.2,0.7 L289.6,0.9 L289.0,0.9 L288.4,0.8 L287.8,0.9 L287.2,0.9 L286.6,0.7 L286.0,0.9 L285.4,1.5 L284.8,1.4 L284.2,1.7 L283.6,2.2 L283.0,1.9 L282.4,2.6 L281.8,2.3 L281.2,2.6 L280.6,2.6 L280.0,3.9 L279.4,4.6 L278.8,3.9 L278.2,5.2 L277.6,5.5 L277.0,4.3 L276.4,4.4 L275.8,4.9 L275.2,4.2 L274.6,4.2 L274.0,3.0 L273.4,3.4 L272.8,2.6 L272.2,2.5 L271.6,3.0 L271.0,3.4 L270.4,3.3 L269.8,3.5 L269.2,4.2 L268.6,3.7 L268.0,3.7 L267.4,3.4 L266.8,3.4 L266.2,3.4 L265.6,3.9 L265.0,3.0 L264.4,4.1 L263.8,3.3 L263.2,4.7 L262.6,5.3 L262.0,4.9 L261.4,4.3 L260.8,5.2 L260.2,4.4 L259.6,5.1 L259.0,5.1 L258.4,4.3 L257.8,4.8 L257.2,4.5 L256.6,6.5 L256.0,5.1 L255.4,7.4 L254.8,8.2 L254.2,7.5 L253.6,7.3 L253.0,4.5 L252.4,3.5 L251.8,2.5 L251.2,2.8 L250.6,4.3 L250.0,5.2 L249.4,8.8 L248.8,6.5 L248.2,4.7 L247.6,4.4 L247.0,2.9 L246.4,3.0 L245.8,2.7 L245.2,2.6 L244.6,2.8 L244.0,2.9 L243.4,2.8 L242.8,3.1 L242.2,3.3 L241.6,4.0 L241.0,5.4 L240.4,6.5 L239.8,7.5 L239.2,6.2 L238.6,11.8 L238.0,10.9 L237.4,13.4 L236.8,13.8 L236.2,15.2 L235.6,15.5 L235.0,12.3 L234.4,14.8 L233.8,10.0 L233.2,6.5 L232.6,3.8 L232.0,2.4 L231.4,3.4 L230.8,3.6 L230.2,4.5 L229.6,3.9 L229.0,3.8 L228.4,4.3 L227.8,4.6 L227.2,4.7 L226.6,8.9 L226.0,8.3 L225.4,13.6 L224.8,16.2 L224.2,12.0 L223.6,16.3 L223.0,16.1 L222.4,14.3 L221.8,15.0 L221.2,15.8 L220.6,13.6 L220.0,12.7 L219.4,10.8 L218.8,8.0 L218.2,3.1 L217.6,2.3 L217.0,3.2 L216.4,2.9 L215.8,3.1 L215.2,4.0 L214.6,4.0 L214.0,4.3 L213.4,5.1 L212.8,6.1 L212.2,6.9 L211.6,6.8 L211.0,6.2 L210.4,7.1 L209.8,4.6 L209.2,5.3 L208.6,4.5 L208.0,3.6 L207.4,3.1 L206.8,3.9 L206.2,6.2 L205.6,10.1 L205.0,13.3 L204.4,16.0 L203.8,11.9 L203.2,8.5 L202.6,3.6 L202.0,2.7 L201.4,2.4 L200.8,2.8 L200.2,5.3 L199.6,11.2 L199.0,14.3 L198.4,12.3 L197.8,16.3 L197.2,11.3 L196.6,12.3 L196.0,13.7 L195.4,11.9 L194.8,8.1 L194.2,1.9 L193.6,0.6 L193.0,0.4 L192.4,0.6 L191.8,0.5 L191.2,0.6 L190.6,0.5 L190.0,0.6 L189.4,0.5 L188.8,0.6 L188.2,0.6 L187.6,0.5 L187.0,0.5 L186.4,0.5 L185.8,0.6 L185.2,0.6 L184.6,0.5 L184.0,0.6 L183.4,0.6 L182.8,0.6 L182.2,0.5 L181.6,0.6 L181.0,0.5 L180.4,0.5 L179.8,0.5 L179.2,0.4 L178.6,0.5 L178.0,0.4 L177.4,0.8 L176.8,1.0 L176.2,0.9 L175.6,1.0 L175.0,1.6 L174.4,1.6 L173.8,2.5 L173.2,2.3 L172.6,4.0 L172.0,4.5 L171.4,5.8 L170.8,6.1 L170.2,4.4 L169.6,3.8 L169.0,2.8 L168.4,2.4 L167.8,1.5 L167.2,2.6 L166.6,3.6 L166.0,5.4 L165.4,8.0 L164.8,9.7 L164.2,14.6 L163.6,14.6 L163.0,13.5 L162.4,11.7 L161.8,16.0 L161.2,15.5 L160.6,11.9 L160.0,11.4 L159.4,16.3 L158.8,11.6 L158.2,13.0 L157.6,14.1 L157.0,12.9 L156.4,12.9 L155.8,13.3 L155.2,10.4 L154.6,11.5 L154.0,9.6 L153.4,9.7 L152.8,6.5 L152.2,7.0 L151.6,7.3 L151.0,5.3 L150.4,5.5 L149.8,4.4 L149.2,3.6 L148.6,2.8 L148.0,2.2 L147.4,1.8 L146.8,1.5 L146.2,1.6 L145.6,1.6 L145.0,1.4 L144.4,1.2 L143.8,1.2 L143.2,1.1 L142.6,1.1 L142.0,0.9 L141.4,1.8 L140.8,2.1 L140.2,3.4 L139.6,3.7 L139.0,3.5 L138.4,4.4 L137.8,4.5 L137.2,3.9 L136.6,2.4 L136.0,2.1 L135.4,1.9 L134.8,2.1 L134.2,3.3 L133.6,3.1 L133.0,4.2 L132.4,6.0 L131.8,6.5 L131.2,8.8 L130.6,6.4 L130.0,5.1 L129.4,3.8 L128.8,3.3 L128.2,3.5 L127.6,3.4 L127.0,3.2 L126.4,2.4 L125.8,3.5 L125.2,5.3 L124.6,6.2 L124.0,7.4 L123.4,9.6 L122.8,8.5 L122.2,11.3 L121.6,8.6 L121.0,7.4 L120.4,5.7 L119.8,4.6 L119.2,3.5 L118.6,2.8 L118.0,2.9 L117.4,4.0 L116.8,5.8 L116.2,9.5 L115.6,15.4 L115.0,13.4 L114.4,14.3 L113.8,11.5 L113.2,11.3 L112.6,6.2 L112.0,5.8 L111.4,4.2 L110.8,3.3 L110.2,2.7 L109.6,1.2 L109.0,0.5 L108.4,0.5 L107.8,0.4 L107.2,0.4 L106.6,0.4 L106.0,0.4 L105.4,0.4 L104.8,0.3 L104.2,0.4 L103.6,0.4 L103.0,0.4 L102.4,0.4 L101.8,0.4 L101.2,0.4 L100.6,0.4 L100.0,0.5 L99.4,0.5 L98.8,0.5 L98.2,0.5 L97.6,0.6 L97.0,0.5 L96.4,0.4 L95.8,0.3 L95.2,0.3 L94.6,0.3 L94.0,0.3Z" fill="#6464dc"/></svg>
<svg style="left:0;top:194px" width="825" height="1"><path d="M94.0,-0.7 L94.6,-0.6 L95.2,-0.6 L95.8,-0.9 L96.4,-1.0 L97.0,-0.9 L97.6,-1.2 L98.2,-0.8 L98.8,-0.9 L99.4,-1.5 L100.0,-1.3 L100.6,-0.8 L101.2,-1.2 L101.8,-1.1 L102.4,-1.1 L103.0,-0.9 L103.6,-0.9 L104.2,-0.6 L104.8,-0.6 L105.4,-0.9 L106.0,-1.1 L106.6,-1.0 L107.2,-1.2 L107.8,-1.1 L108.4,-1.1 L109.0,-0.9 L109.6,-3.1 L110.2,-5.5 L110.8,-7.9 L111.4,-13.8 L112.0,-14.5 L112.6,-20.5 L113.2,-24.9 L113.8,-30.0 L114.4,-32.0 L115.0,-32.0 L115.6,-32.0 L116.2,-27.3 L116.8,-15.1 L117.4,-11.2 L118.0,-9.1 L118.6,-9.7 L119.2,-9.0 L119.8,-11.9 L120.4,-15.8 L121.0,-27.4 L121.6,-22.3 L122.2,-22.1 L122.8,-27.4 L123.4,-24.2 L124.0,-28.6 L124.6,-23.6 L125.2,-14.7 L125.8,-11.0 L126.4,-6.8 L127.0,-8.9 L127.6,-7.7 L128.2,-10.5 L128.8,-11.6 L129.4,-12.9 L130.0,-12.3 L130.6,-19.6 L131.2,-24.7 L131.8,-18.8 L132.4,-13.8 L133.0,-13.8 L133.6,-10.7 L134.2,-8.8 L134.8,-7.2 L135.4,-5.3 L136.0,-7.1 L136.6,-9.1 L137.2,-7.9 L137.8,-12.7 L138.4,-15.7 L139.0,-12.0 L139.6,-12.1 L140.2,-9.8 L140.8,-7.4 L141.4,-4.3 L142.0,-2.1 L142.6,-3.6 L143.2,-3.3 L143.8,-3.9 L144.4,-3.4 L145.0,-3.0 L145.6,-3.4 L146.2,-4.6 L146.8,-5.1 L147.4,-5.6 L148.0,-6.6 L148.6,-8.8 L149.2,-10.5 L149.8,-13.1 L150.4,-14.0 L151.0,-18.8 L151.6,-18.4 L152.2,-16.6 L152.8,-17.5 L153.4,-25.0 L154.0,-21.3 L154.6,-22.8 L155.2,-26.2 L155.8,-32.0 L156.4,-30.2 L157.0,-32.0 L157.6,-32.0 L158.2,-32.0 L158.8,-32.0 L159.4,-32.0 L160.0,-31.7 L160.6,-32.0 L161.2,-32.0 L161.8,-32.0 L162.4,-32.0 L163.0,-30.9 L163.6,-31.2 L164.2,-32.0 L164.8,-22.1 L165.4,-17.7 L166.0,-13.3 L166.6,-10.0 L167.2,-6.3 L167.8,-4.0 L168.4,-6.9 L169.0,-7.4 L169.6,-13.1 L170.2,-14.2 L170.8,-19.2 L171.4,-18.2 L172.0,-14.3 L172.6,-12.0 L173.2,-7.5 L173.8,-5.4 L174.4,-4.8 L175.0,-4.9 L175.6,-2.8 L176.2,-2.2 L176.8,-1.6 L177.4,-1.7 L178.0,-1.1 L178.6,-1.2 L179.2,-1.0 L179.8,-1.1 L180.4,-0.8 L181.0,-1.0 L181.6,-1.5 L182.2,-1.6 L182.8,-1.7 L183.4,-1.4 L184.0,-1.7 L184.6,-1.6 L185.2,-1.3 L185.8,-1.6 L186.4,-1.5 L187.0,-0.8 L187.6,-0.9 L188.2,-1.4 L188.8,-1.3 L189.4,-1.5 L190.0,-1.4 L190.6,-1.0 L191.2,-1.5 L191.8,-1.7 L192.4,-1.3 L193.0,-1.4 L193.6,-0.9 L194.2,-5.8 L194.8,-17.1 L195.4,-32.0 L196.0,-32.0 L196.6,-31.9 L197.2,-32.0 L197.8,-32.0 L198.4,-32.0 L199.0,-32.0 L199.6,-22.4 L200.2,-12.4 L200.8,-10.1 L201.4,-9.6 L202.0,-6.1 L202.6,-9.6 L203.2,-26.7 L203.8,-32.0 L204.4,-32.0 L205.0,-32.0 L205.6,-32.0 L206.2,-20.0 L206.8,-9.7 L207.4,-11.2 L208.0,-10.4 L208.6,-13.4 L209.2,-13.4 L209.8,-15.6 L210.4,-19.8 L211.0,-21.9 L211.6,-22.6 L212.2,-16.3 L212.8,-19.3 L213.4,-13.3 L214.0,-11.5 L214.6,-14.5 L215.2,-13.2 L215.8,-8.5 L216.4,-8.3 L217.0,-7.0 L217.6,-7.4 L218.2,-9.2 L218.8,-15.3 L219.4,-23.9 L220.0,-32.0 L220.6,-32.0 L221.2,-32.0 L221.8,-30.3 L222.4,-32.0 L223.0,-30.0 L223.6,-32.0 L224.2,-32.0 L224.8,-32.0 L225.4,-32.0 L226.0,-27.2 L226.6,-23.9 L227.2,-15.9 L227.8,-10.5 L228.4,-9.8 L229.0,-12.2 L229.6,-12.3 L230.2,-11.6 L230.8,-12.9 L231.4,-7.9 L232.0,-6.1 L232.6,-12.4 L233.2,-21.4 L233.8,-22.7 L234.4,-32.0 L235.0,-32.0 L235.6,-32.0 L236.2,-32.0 L236.8,-32.0 L237.4,-32.0 L238.0,-32.0 L238.6,-26.4 L239.2,-17.4 L239.8,-17.2 L240.4,-17.0 L241.0,-11.9 L241.6,-11.4 L242.2,-9.3 L242.8,-8.0 L243.4,-8.4 L244.0,-10.2 L244.6,-9.2 L245.2,-6.1 L245.8,-9.2 L246.4,-10.2 L247.0,-10.9 L247.6,-8.3 L248.2,-10.1 L248.8,-14.2 L249.4,-23.5 L250.0,-16.3 L250.6,-12.6 L251.2,-10.3 L251.8,-5.8 L252.4,-9.4 L253.0,-13.9 L253.6,-20.4 L254.2,-24.7 L254.8,-18.8 L255.4,-15.2 L256.0,-15.1 L256.6,-15.6 L257.2,-15.8 L257.8,-10.9 L258.4,-14.5 L259.0,-12.8 L259.6,-14.7 L260.2,-11.1 L260.8,-13.6 L261.4,-11.5 L262.0,-11.3 L262.6,-11.5 L263.2,-11.6 L263.8,-11.5 L264.4,-9.8 L265.0,-10.7 L265.6,-7.7 L266.2,-10.1 L266.8,-12.0 L267.4,-12.2 L268.0,-12.0 L268.6,-10.8 L269.2,-9.8 L269.8,-9.0 L270.4,-10.6 L271.0,-8.0 L271.6,-7.0 L272.2,-8.3 L272.8,-6.4 L273.4,-7.2 L274.0,-8.2 L274.6,-9.5 L275.2,-10.1 L275.8,-10.2 L276.4,-12.2 L277.0,-15.7 L277.6,-11.4 L278.2,-16.3 L278.8,-11.7 L279.4,-10.0 L280.0,-8.0 L280.6,-10.0 L281.2,-8.6 L281.8,-5.5 L282.4,-7.4 L283.0,-5.0 L283.6,-5.2 L284.2,-4.3 L284.8,-4.6 L285.4,-3.2 L286.0,-1.3 L286.6,-1.3 L287.2,-2.2 L287.8,-1.8 L288.4,-1.9 L289.0,-2.0 L289.6,-2.0 L290.2,-2.5 L290.8,-2.0 L291.4,-1.9 L292.0,-2.1 L292.6,-1.4 L293.2,-2.1 L293.8,-1.9 L294.4,-4.5 L295.0,-7.1 L295.6,-12.2 L296.2,-18.7 L296.8,-27.6 L297.4,-32.0 L298.0,-32.0 L298.6,-19.1 L299.2,-13.1 L299.8,-8.5 L300.4,-8.6 L301.0,-7.4 L301.6,-5.6 L302.2,-4.3 L302.8,-3.0 L303.4,-2.8 L304.0,-2.8 L304.6,-6.2 L305.2,-9.6 L305.8,-13.6 L306.4,-26.6 L307.0,-30.0 L307.6,-32.0 L308.2,-32.0 L308.8,-17.7 L309.4,-12.6 L310.0,-9.1 L310.6,-7.7 L311.2,-6.1 L311.8,-4.9 L312.4,-5.6 L313.0,-3.6 L313.6,-3.3 L314.2,-2.0 L314.8,-1.4 L315.4,-1.8 L316.0,-1.1 L316.6,-1.7 L317.2,-1.2 L317.8,-1.7 L318.4,-1.3 L319.0,-1.9 L319.6,-0.9 L320.2,-1.4 L320.8,-1.1 L321.4,-0.9 L322.0,-1.5 L322.6,-1.1 L323.2,-1.7 L323.8,-1.6 L324.4,-1.9 L325.0,-1.2 L325.6,-2.4 L326.2,-2.1 L326.8,-3.5 L327.4,-3.8 L328.0,-2.5 L328.6,-1.9 L329.2,-1.0 L329.8,-1.5 L330.4,-0.7 L331.0,-0.7 L331.6,-0.9 L332.2,-0.8 L332.8,-0.5 L333.4,-0.7 L334.0,-0.7 L334.6,-0.4 L335.2,-0.7 L335.8,-0.7 L336.4,-0.4 L337.0,-0.4 L337.6,-0.4 L338.2,-0.7 L338.8,-0.8 L339.4,-0.6 L340.0,-0.5 L340.6,-0.6 L341.2,-0.7 L341.8,-0.4 L342.4,-0.7 L343.0,-0.6 L343.6,-0.4 L344.2,-0.7 L344.8,-0.5 L345.4,-0.6 L346.0,-0.4 L346.6,-0.7 L347.2,-0.5 L347.8,-0.4 L348.4,-0.4 L349.0,-0.6 L349.6,-0.5 L350.2,-0.7 L350.8,-0.5 L351.4,-0.7 L352.0,-0.4 L352.6,-0.6 L353.2,-0.7 L353.8,-0.5 L354.4,-0.4 L355.0,-0.5 L355.6,-0.5 L356.2,-0.7 L356.8,-0.4 L357.4,-0.7 L358.0,-0.4 L358.6,-0.4 L359.2,-0.5 L359.8,-0.6 L360.4,-0.4 L361.0,-0.7 L361.6,-0.6 L362.2,-0.4 L362.8,-0.7 L363.4,-0.6 L364.0,-0.5 L364.6,-0.5 L365.2,-0.6 L365.8,-0.5 L366.4,-0.6 L367.0,-0.6 L367.6,-0.6 L368.2,-0.6 L368.8,-0.7 L369.4,-0.6 L370.0,-0.6 L370.6,-0.6 L371.2,-0.4 L371.8,-0.7 L372.4,-0.5 L373.0,-0.5 L373.6,-0.5 L374.2,-0.5 L374.8,-0.7 L375.4,-0.7 L376.0,-0.4 L376.6,-0.6 L377.2,-0.4 L377.8,-0.6 L378.4,-0.5 L379.0,-0.4 L379.6,-0.7 L380.2,-0.5 L380.8,-0.4 L381.4,-0.5 L382.0,-0.5 L382.6,-0.5 L383.2,-0.4 L383.8,-0.7 L384.4,-0.6 L385.0,-0.8 L385.6,-0.4 L386.2,-0.7 L386.8,-0.7 L387.4,-0.7 L388.0,-0.6 L388.6,-0.7 L389.2,-0.6 L389.8,-0.7 L390.4,-0.5 L391.0,-0.4 L391.6,-0.6 L392.2,-0.7 L392.8,-0.5 L393.4,-0.7 L394.0,-0.8 L394.6,-0.6 L395.2,-0.6 L395.8,-0.8 L396.4,-0.7 L397.0,-0.6 L397.6,-0.5 L398.2,-0.7 L398.8,-0.5 L399.4,-0.5 L400.0,-0.6 L400.6,-0.8 L401.2,-0.5 L401.8,-0.6 L402.4,-0.4 L403.0,-0.6 L403.6,-0.4 L404.2,-0.6 L404.8,-0.7 L405.4,-0.6 L406.0,-0.6 L406.6,-0.5 L407.2,-0.4 L407.8,-0.7 L408.4,-0.7 L409.0,-0.5 L409.6,-0.5 L410.2,-0.7 L410.8,-0.4 L411.4,-0.6 L412.0,-0.4 L412.6,-0.7 L413.2,-0.5 L413.8,-0.4 L414.4,-0.4 L415.0,-0.8 L415.6,-0.4 L416.2,-0.5 L416.8,-0.4 L417.4,-0.7 L418.0,-0.6 L418.6,-0.7 L419.2,-0.7 L419.8,-0.6 L420.4,-0.5 L421.0,-0.7 L421.6,-0.5 L422.2,-0.6 L422.8,-0.5 L423.4,-0.5 L424.0,-0.8 L424.6,-0.5 L425.2,-0.6 L425.8,-0.6 L426.4,-0.6 L427.0,-0.7 L427.6,-0.7 L428.2,-0.7 L428.8,-0.9 L429.4,-1.3 L430.0,-1.4 L430.6,-0.9 L431.2,-1.1 L431.8,-0.6 L432.4,-0.7 L433.0,-0.6 L433.6,-0.7 L434.2,-0.8 L434.8,-0.5 L435.4,-0.5 L436.0,-0.8 L436.6,-0.6 L437.2,-0.4 L437.8,-0.5 L437.8,0.5 L437.2,0.6 L436.6,0.4 L436.0,0.6 L435.4,0.7 L434.8,0.8 L434.2,0.9 L433.6,0.6 L433.0,0.8 L432.4,1.0 L431.8,1.0 L431.2,1.3 L430.6,1.4 L430.0,1.5 L429.4,0.7 L428.8,1.0 L428.2,0.5 L427.6,0.9 L427.0,0.5 L426.4,0.5 L425.8,0.8 L425.2,0.7 L424.6,0.4 L424.0,0.7 L423.4,0.5 L422.8,0.6 L422.2,0.4 L421.6,0.6 L421.0,0.6 L420.4,0.7 L419.8,0.7 L419.2,0.4 L418.6,0.5 L418.0,0.7 L417.4,0.7 L416.8,0.7 L416.2,0.7 L415.6,0.4 L415.0,0.4 L414.4,0.6 L413.8,0.4 L413.2,0.4 L412.6,0.8 L412.0,0.5 L411.4,0.7 L410.8,0.4 L410.2,0.4 L409.6,0.5 L409.0,0.5 L408.4,0.7 L407.8,0.6 L407.2,0.4 L406.6,0.7 L406.0,0.4 L405.4,0.6 L404.8,0.6 L404.2,0.6 L403.6,0.4 L403.0,0.4 L402.4,0.7 L401.8,0.6 L401.2,0.5 L400.6,0.6 L400.0,0.5 L399.4,0.7 L398.8,0.6 L398.2,0.4 L397.6,0.6 L397.0,0.5 L396.4,0.4 L395.8,0.6 L395.2,0.7 L394.6,0.4 L394.0,0.4 L393.4,0.5 L392.8,0.6 L392.2,0.4 L391.6,0.6 L391.0,0.5 L390.4,0.4 L389.8,0.6 L389.2,0.7 L388.6,0.4 L388.0,0.7 L387.4,0.6 L386.8,0.7 L386.2,0.5 L385.6,0.4 L385.0,0.6 L384.4,0.4 L383.8,0.4 L383.2,0.7 L382.6,0.7 L382.0,0.6 L381.4,0.5 L380.8,0.7 L380.2,0.5 L379.6,0.5 L379.0,0.7 L378.4,0.5 L377.8,0.7 L377.2,0.8 L376.6,0.6 L376.0,0.7 L375.4,0.5 L374.8,0.6 L374.2,0.4 L373.6,0.6 L373.0,0.4 L372.4,0.4 L371.8,0.4 L371.2,0.6 L370.6,0.5 L370.0,0.6 L369.4,0.6 L368.8,0.6 L368.2,0.4 L367.6,0.8 L367.0,0.7 L366.4,0.7 L365.8,0.6 L365.2,0.5 L364.6,0.7 L364.0,0.6 L363.4,0.6 L362.8,0.6 L362.2,0.7 L361.6,0.7 L361.0,0.7 L360.4,0.6 L359.8,0.6 L359.2,0.7 L358.6,0.5 L358.0,0.6 L357.4,0.7 L356.8,0.5 L356.2,0.4 L355.6,0.4 L355.0,0.6 L354.4,0.4 L353.8,0.6 L353.2,0.5 L352.6,0.4 L352.0,0.5 L351.4,0.6 L350.8,0.5 L350.2,0.7 L349.6,0.5 L349.0,0.5 L348.4,0.5 L347.8,0.7 L347.2,0.5 L346.6,0.6 L346.0,0.7 L345.4,0.4 L344.8,0.4 L344.2,0.5 L343.6,0.6 L343.0,0.6 L342.4,0.8 L341.8,0.4 L341.2,0.4 L340.6,0.6 L340.0,0.7 L339.4,0.4 L338.8,0.6 L338.2,0.5 L337.6,0.5 L337.0,0.5 L336.4,0.4 L335.8,0.6 L335.2,0.7 L334.6,0.4 L334.0,0.8 L333.4,0.4 L332.8,0.7 L332.2,0.5 L331.6,0.9 L331.0,0.6 L330.4,1.4 L329.8,0.8 L329.2,1.4 L328.6,1.7 L328.0,2.8 L327.4,3.1 L326.8,3.6 L326.2,2.0 L325.6,1.7 L325.0,1.8 L324.4,0.9 L323.8,1.9 L323.2,1.4 L322.6,1.4 L322.0,1.6 L321.4,1.2 L320.8,1.0 L320.2,1.7 L319.6,1.8 L319.0,1.8 L318.4,1.3 L317.8,1.9 L317.2,1.7 L316.6,2.2 L316.0,2.0 L315.4,1.6 L314.8,2.3 L314.2,2.8 L313.6,3.0 L313.0,3.2 L312.4,5.4 L311.8,4.8 L311.2,8.7 L310.6,9.3 L310.0,10.7 L309.4,11.2 L308.8,13.2 L308.2,23.5 L307.6,32.0 L307.0,30.5 L306.4,27.5 L305.8,16.2 L305.2,7.0 L304.6,5.4 L304.0,2.2 L303.4,3.4 L302.8,4.4 L302.2,4.4 L301.6,5.0 L301.0,5.5 L300.4,9.3 L299.8,8.4 L299.2,12.0 L298.6,14.1 L298.0,27.7 L297.4,32.0 L296.8,31.9 L296.2,24.7 L295.6,14.6 L295.0,5.4 L294.4,4.7 L293.8,2.7 L293.2,1.4 L292.6,2.4 L292.0,1.3 L291.4,1.4 L290.8,1.4 L290.2,2.0 L289.6,1.6 L289.0,1.3 L288.4,2.3 L287.8,1.9 L287.2,2.1 L286.6,2.6 L286.0,2.1 L285.4,3.9 L284.8,4.3 L284.2,4.4 L283.6,6.3 L283.0,6.6 L282.4,6.7 L281.8,8.0 L281.2,8.7 L280.6,7.2 L280.0,9.6 L279.4,11.1 L278.8,12.4 L278.2,11.3 L277.6,14.7 L277.0,13.3 L276.4,14.3 L275.8,9.1 L275.2,9.3 L274.6,11.4 L274.0,9.2 L273.4,7.3 L272.8,8.2 L272.2,8.6 L271.6,7.2 L271.0,10.4 L270.4,8.5 L269.8,8.2 L269.2,11.4 L268.6,9.7 L268.0,12.1 L267.4,13.0 L266.8,10.1 L266.2,11.6 L265.6,8.0 L265.0,7.3 L264.4,11.3 L263.8,13.1 L263.2,10.2 L262.6,11.9 L262.0,15.5 L261.4,11.8 L260.8,12.5 L260.2,15.2 L259.6,15.2 L259.0,13.9 L258.4,12.9 L257.8,10.9 L257.2,16.4 L256.6,14.1 L256.0,13.7 L255.4,16.2 L254.8,19.1 L254.2,23.1 L253.6,19.9 L253.0,16.6 L252.4,8.9 L251.8,7.1 L251.2,6.8 L250.6,13.4 L250.0,15.9 L249.4,20.1 L248.8,13.8 L248.2,12.6 L247.6,8.5 L247.0,10.7 L246.4,6.9 L245.8,6.8 L245.2,7.5 L244.6,9.2 L244.0,7.4 L243.4,10.7 L242.8,7.4 L242.2,9.3 L241.6,8.2 L241.0,11.1 L240.4,18.8 L239.8,21.2 L239.2,16.6 L238.6,24.2 L238.0,32.0 L237.4,32.0 L236.8,32.0 L236.2,32.0 L235.6,32.0 L235.0,32.0 L234.4,32.0 L233.8,26.4 L233.2,23.7 L232.6,11.1 L232.0,5.2 L231.4,10.6 L230.8,10.9 L230.2,14.1 L229.6,9.3 L229.0,11.2 L228.4,9.6 L227.8,12.5 L227.2,13.7 L226.6,18.8 L226.0,28.3 L225.4,32.0 L224.8,32.0 L224.2,31.8 L223.6,32.0 L223.0,32.0 L222.4,32.0 L221.8,30.5 L221.2,32.0 L220.6,32.0 L220.0,32.0 L219.4,28.6 L218.8,17.0 L218.2,8.6 L217.6,6.4 L217.0,8.0 L216.4,7.4 L215.8,8.8 L215.2,13.6 L214.6,12.3 L214.0,11.5 L213.4,14.9 L212.8,14.3 L212.2,16.0 L211.6,16.0 L211.0,18.7 L210.4,17.6 L209.8,16.8 L209.2,14.9 L208.6,13.1 L208.0,8.9 L207.4,8.4 L206.8,13.5 L206.2,18.6 L205.6,30.6 L205.0,32.0 L204.4,32.0 L203.8,32.0 L203.2,32.0 L202.6,8.8 L202.0,7.7 L201.4,8.1 L200.8,9.4 L200.2,16.8 L199.6,26.8 L199.0,32.0 L198.4,32.0 L197.8,32.0 L197.2,32.0 L196.6,32.0 L196.0,32.0 L195.4,32.0 L194.8,19.0 L194.2,6.6 L193.6,1.0 L193.0,1.4 L192.4,1.5 L191.8,1.3 L191.2,1.0 L190.6,0.9 L190.0,0.9 L189.4,1.3 L188.8,0.8 L188.2,1.4 L187.6,1.6 L187.0,0.9 L186.4,1.5 L185.8,1.4 L185.2,1.6 L184.6,0.9 L184.0,1.4 L183.4,0.8 L182.8,0.9 L182.2,1.2 L181.6,1.4 L181.0,1.4 L180.4,0.8 L179.8,0.9 L179.2,1.3 L178.6,1.3 L178.0,1.1 L177.4,1.3 L176.8,2.6 L176.2,1.7 L175.6,2.8 L175.0,4.9 L174.4,4.6 L173.8,5.2 L173.2,7.3 L172.6,11.4 L172.0,15.9 L171.4,15.1 L170.8,16.3 L170.2,17.1 L169.6,12.1 L169.0,8.4 L168.4,5.9 L167.8,4.9 L167.2,6.9 L166.6,9.4 L166.0,12.4 L165.4,19.5 L164.8,31.6 L164.2,29.1 L163.6,32.0 L163.0,32.0 L162.4,32.0 L161.8,32.0 L161.2,32.0 L160.6,32.0 L160.0,32.0 L159.4,32.0 L158.8,32.0 L158.2,30.3 L157.6,30.3 L157.0,32.0 L156.4,32.0 L155.8,32.0 L155.2,32.0 L154.6,31.5 L154.0,27.4 L153.4,26.1 L152.8,19.1 L152.2,16.5 L151.6,21.4 L151.0,19.3 L150.4,16.8 L149.8,11.8 L149.2,10.0 L148.6,9.4 L148.0,5.9 L147.4,4.8 L146.8,5.6 L146.2,4.1 L145.6,4.0 L145.0,2.8 L144.4,2.7 L143.8,3.3 L143.2,3.7 L142.6,2.9 L142.0,2.4 L141.4,4.2 L140.8,5.7 L140.2,8.0 L139.6,10.7 L139.0,9.9 L138.4,13.8 L137.8,9.5 L137.2,8.0 L136.6,8.4 L136.0,5.6 L135.4,4.4 L134.8,6.4 L134.2,9.7 L133.6,11.3 L133.0,13.5 L132.4,13.9 L131.8,17.6 L131.2,25.2 L130.6,21.7 L130.0,14.0 L129.4,12.0 L128.8,11.2 L128.2,10.0 L127.6,7.3 L127.0,8.1 L126.4,7.2 L125.8,10.6 L125.2,11.5 L124.6,20.0 L124.0,21.3 L123.4,27.2 L122.8,27.6 L122.2,30.4 L121.6,23.3 L121.0,24.7 L120.4,18.0 L119.8,11.5 L119.2,8.8 L118.6,7.4 L118.0,9.1 L117.4,11.6 L116.8,11.3 L116.2,25.4 L115.6,32.0 L115.0,30.0 L114.4,32.0 L113.8,30.4 L113.2,30.9 L112.6,16.0 L112.0,16.6 L111.4,9.7 L110.8,8.4 L110.2,5.4 L109.6,3.9 L109.0,0.9 L108.4,1.4 L107.8,0.6 L107.2,1.2 L106.6,1.0 L106.0,0.7 L105.4,1.0 L104.8,0.8 L104.2,0.7 L103.6,0.7 L103.0,0.9 L102.4,1.1 L101.8,1.0 L101.2,1.0 L100.6,0.7 L100.0,1.1 L99.4,0.9 L98.8,0.9 L98.2,1.5 L97.6,1.0 L97.0,1.2 L96.4,1.3 L95.8,0.6 L95.2,0.9 L94.6,0.9 L94.0,0.6Z" fill="#3232c8"/><path d="M94.0,-0.3 L94.6,-0.3 L95.2,-0.3 L95.8,-0.3 L96.4,-0.4 L97.0,-0.5 L97.6,-0.6 L98.2,-0.5 L98.8,-0.5 L99.4,-0.5 L100.0,-0.5 L100.6,-0.4 L101.2,-0.4 L101.8,-0.4 L102.4,-0.4 L103.0,-0.4 L103.6,-0.4 L104.2,-0.4 L104.8,-0.3 L105.4,-0.4 L106.0,-0.4 L106.6,-0.4 L107.2,-0.4 L107.8,-0.4 L108.4,-0.5 L109.0,-0.5 L109.6,-1.2 L110.2,-2.7 L110.8,-3.3 L111.4,-4.2 L112.0,-5.8 L112.6,-6.2 L113.2,-11.3 L113.8,-11.5 L114.4,-14.3 L115.0,-13.4 L115.6,-15.4 L116.2,-9.5 L116.8,-5.8 L117.4,-4.0 L118.0,-2.9 L118.6,-2.8 L119.2,-3.5 L119.8,-4.6 L120.4,-5.7 L121.0,-7.4 L121.6,-8.6 L122.2,-11.3 L122.8,-8.5 L123.4,-9.6 L124.0,-7.4 L124.6,-6.2 L125.2,-5.3 L125.8,-3.5 L126.4,-2.4 L127.0,-3.2 L127.6,-3.4 L128.2,-3.5 L128.8,-3.3 L129.4,-3.8 L130.0,-5.1 L130.6,-6.4 L131.2,-8.8 L131.8,-6.5 L132.4,-6.0 L133.0,-4.2 L133.6,-3.1 L134.2,-3.3 L134.8,-2.1 L135.4,-1.9 L136.0,-2.1 L136.6,-2.4 L137.2,-3.9 L137.8,-4.5 L138.4,-4.4 L139.0,-3.5 L139.6,-3.7 L140.2,-3.4 L140.8,-2.1 L141.4,-1.8 L142.0,-0.9 L142.6,-1.1 L143.2,-1.1 L143.8,-1.2 L144.4,-1.2 L145.0,-1.4 L145.6,-1.6 L146.2,-1.6 L146.8,-1.5 L147.4,-1.8 L148.0,-2.2 L148.6,-2.8 L149.2,-3.6 L149.8,-4.4 L150.4,-5.5 L151.0,-5.3 L151.6,-7.3 L152.2,-7.0 L152.8,-6.5 L153.4,-9.7 L154.0,-9.6 L154.6,-11.5 L155.2,-10.4 L155.8,-13.3 L156.4,-12.9 L157.0,-12.9 L157.6,-14.1 L158.2,-13.0 L158.8,-11.6 L159.4,-16.3 L160.0,-11.4 L160.6,-11.9 L161.2,-15.5 L161.8,-16.0 L162.4,-11.7 L163.0,-13.5 L163.6,-14.6 L164.2,-14.6 L164.8,-9.7 L165.4,-8.0 L166.0,-5.4 L166.6,-3.6 L167.2,-2.6 L167.8,-1.5 L168.4,-2.4 L169.0,-2.8 L169.6,-3.8 L170.2,-4.4 L170.8,-6.1 L171.4,-5.8 L172.0,-4.5 L172.6,-4.0 L173.2,-2.3 L173.8,-2.5 L174.4,-1.6 L175.0,-1.6 L175.6,-1.0 L176.2,-0.9 L176.8,-1.0 L177.4,-0.8 L178.0,-0.4 L178.6,-0.5 L179.2,-0.4 L179.8,-0.5 L180.4,-0.5 L181.0,-0.5 L181.6,-0.6 L182.2,-0.5 L182.8,-0.6 L183.4,-0.6 L184.0,-0.6 L184.6,-0.5 L185.2,-0.6 L185.8,-0.6 L186.4,-0.5 L187.0,-0.5 L187.6,-0.5 L188.2,-0.6 L188.8,-0.6 L189.4,-0.5 L190.0,-0.6 L190.6,-0.5 L191.2,-0.6 L191.8,-0.5 L192.4,-0.6 L193.0,-0.4 L193.6,-0.6 L194.2,-1.9 L194.8,-8.1 L195.4,-11.9 L196.0,-13.7 L196.6,-12.3 L197.2,-11.3 L197.8,-16.3 L198.4,-12.3 L199.0,-14.3 L199.6,-11.2 L200.2,-5.3 L200.8,-2.8 L201.4,-2.4 L202.0,-2.7 L202.6,-3.6 L203.2,-8.5 L203.8,-11.9 L204.4,-16.0 L205.0,-13.3 L205.6,-10.1 L206.2,-6.2 L206.8,-3.9 L207.4,-3.1 L208.0,-3.6 L208.6,-4.5 L209.2,-5.3 L209.8,-4.6 L210.4,-7.1 L211.0,-6.2 L211.6,-6.8 L212.2,-6.9 L212.8,-6.1 L213.4,-5.1 L214.0,-4.3 L214.6,-4.0 L215.2,-4.0 L215.8,-3.1 L216.4,-2.9 L217.0,-3.2 L217.6,-2.3 L218.2,-3.1 L218.8,-8.0 L219.4,-10.8 L220.0,-12.7 L220.6,-13.6 L221.2,-15.8 L221.8,-15.0 L222.4,-14.3 L223.0,-16.1 L223.6,-16.3 L224.2,-12.0 L224.8,-16.2 L225.4,-13.6 L226.0,-8.3 L226.6,-8.9 L227.2,-4.7 L227.8,-4.6 L228.4,-4.3 L229.0,-3.8 L229.6,-3.9 L230.2,-4.5 L230.8,-3.6 L231.4,-3.4 L232.0,-2.4 L232.6,-3.8 L233.2,-6.5 L233.8,-10.0 L234.4,-14.8 L235.0,-12.3 L235.6,-15.5 L236.2,-15.2 L236.8,-13.8 L237.4,-13.4 L238.0,-10.9 L238.6,-11.8 L239.2,-6.2 L239.8,-7.5 L240.4,-6.5 L241.0,-5.4 L241.6,-4.0 L242.2,-3.3 L242.8,-3.1 L243.4,-2.8 L244.0,-2.9 L244.6,-2.8 L245.2,-2.6 L245.8,-2.7 L246.4,-3.0 L247.0,-2.9 L247.6,-4.4 L248.2,-4.7 L248.8,-6.5 L249.4,-8.8 L250.0,-5.2 L250.6,-4.3 L251.2,-2.8 L251.8,-2.5 L252.4,-3.5 L253.0,-4.5 L253.6,-7.3 L254.2,-7.5 L254.8,-8.2 L255.4,-7.4 L256.0,-5.1 L256.6,-6.5 L257.2,-4.5 L257.8,-4.8 L258.4,-4.3 L259.0,-5.1 L259.6,-5.1 L260.2,-4.4 L260.8,-5.2 L261.4,-4.3 L262.0,-4.9 L262.6,-5.3 L263.2,-4.7 L263.8,-3.3 L264.4,-4.1 L265.0,-3.0 L265.6,-3.9 L266.2,-3.4 L266.8,-3.4 L267.4,-3.4 L268.0,-3.7 L268.6,-3.7 L269.2,-4.2 L269.8,-3.5 L270.4,-3.3 L271.0,-3.4 L271.6,-3.0 L272.2,-2.5 L272.8,-2.6 L273.4,-3.4 L274.0,-3.0 L274.6,-4.2 L275.2,-4.2 L275.8,-4.9 L276.4,-4.4 L277.0,-4.3 L277.6,-5.5 L278.2,-5.2 L278.8,-3.9 L279.4,-4.6 L280.0,-3.9 L280.6,-2.6 L281.2,-2.6 L281.8,-2.3 L282.4,-2.6 L283.0,-1.9 L283.6,-2.2 L284.2,-1.7 L284.8,-1.4 L285.4,-1.5 L286.0,-0.9 L286.6,-0.7 L287.2,-0.9 L287.8,-0.9 L288.4,-0.8 L289.0,-0.9 L289.6,-0.9 L290.2,-0.7 L290.8,-0.7 L291.4,-0.8 L292.0,-0.9 L292.6,-0.9 L293.2,-0.9 L293.8,-0.7 L294.4,-1.5 L295.0,-2.7 L295.6,-5.1 L296.2,-9.2 L296.8,-13.5 L297.4,-12.7 L298.0,-11.9 L298.6,-5.3 L299.2,-3.9 L299.8,-4.2 L300.4,-2.5 L301.0,-2.4 L301.6,-2.2 L302.2,-1.7 L302.8,-1.4 L303.4,-1.0 L304.0,-0.8 L304.6,-1.8 L305.2,-3.5 L305.8,-6.5 L306.4,-8.6 L307.0,-12.0 L307.6,-13.9 L308.2,-9.1 L308.8,-4.9 L309.4,-4.6 L310.0,-3.9 L310.6,-3.2 L311.2,-2.4 L311.8,-2.2 L312.4,-1.7 L313.0,-1.5 L313.6,-1.2 L314.2,-1.0 L314.8,-0.6 L315.4,-0.6 L316.0,-0.6 L316.6,-0.6 L317.2,-0.7 L317.8,-0.6 L318.4,-0.5 L319.0,-0.7 L319.6,-0.7 L320.2,-0.6 L320.8,-0.5 L321.4,-0.6 L322.0,-0.6 L322.6,-0.5 L323.2,-0.5 L323.8,-0.5 L324.4,-0.6 L325.0,-0.7 L325.6,-1.0 L326.2,-1.2 L326.8,-1.3 L327.4,-1.3 L328.0,-0.9 L328.6,-0.6 L329.2,-0.4 L329.8,-0.4 L330.4,-0.4 L331.0,-0.3 L331.6,-0.4 L332.2,-0.3 L332.8,-0.3 L333.4,-0.3 L334.0,-0.2 L334.6,-0.2 L335.2,-0.2 L335.8,-0.2 L336.4,-0.3 L337.0,-0.2 L337.6,-0.2 L338.2,-0.2 L338.8,-0.3 L339.4,-0.2 L340.0,-0.2 L340.6,-0.2 L341.2,-0.3 L341.8,-0.2 L342.4,-0.2 L343.0,-0.3 L343.6,-0.2 L344.2,-0.3 L344.8,-0.3 L345.4,-0.2 L346.0,-0.3 L346.6,-0.2 L347.2,-0.3 L347.8,-0.2 L348.4,-0.3 L349.0,-0.3 L349.6,-0.2 L350.2,-0.2 L350.8,-0.2 L351.4,-0.3 L352.0,-0.3 L352.6,-0.2 L353.2,-0.2 L353.8,-0.3 L354.4,-0.2 L355.0,-0.2 L355.6,-0.3 L356.2,-0.3 L356.8,-0.3 L357.4,-0.2 L358.0,-0.2 L358.6,-0.2 L359.2,-0.3 L359.8,-0.2 L360.4,-0.2 L361.0,-0.2 L361.6,-0.2 L362.2,-0.3 L362.8,-0.3 L363.4,-0.2 L364.0,-0.2 L364.6,-0.3 L365.2,-0.2 L365.8,-0.2 L366.4,-0.2 L367.0,-0.2 L367.6,-0.2 L368.2,-0.3 L368.8,-0.2 L369.4,-0.3 L370.0,-0.3 L370.6,-0.3 L371.2,-0.2 L371.8,-0.3 L372.4,-0.2 L373.0,-0.2 L373.6,-0.2 L374.2,-0.3 L374.8,-0.2 L375.4,-0.2 L376.0,-0.3 L376.6,-0.2 L377.2,-0.2 L377.8,-0.3 L378.4,-0.2 L379.0,-0.2 L379.6,-0.2 L380.2,-0.2 L380.8,-0.2 L381.4,-0.2 L382.0,-0.2 L382.6,-0.3 L383.2,-0.3 L383.8,-0.3 L384.4,-0.2 L385.0,-0.2 L385.6,-0.2 L386.2,-0.2 L386.8,-0.2 L387.4,-0.3 L388.0,-0.3 L388.6,-0.3 L389.2,-0.2 L389.8,-0.2 L390.4,-0.2 L391.0,-0.2 L391.6,-0.2 L392.2,-0.3 L392.8,-0.2 L393.4,-0.2 L394.0,-0.2 L394.6,-0.2 L395.2,-0.2 L395.8,-0.2 L396.4,-0.3 L397.0,-0.3 L397.6,-0.2 L398.2,-0.2 L398.8,-0.3 L399.4,-0.2 L400.0,-0.2 L400.6,-0.3 L401.2,-0.2 L401.8,-0.3 L402.4,-0.3 L403.0,-0.2 L403.6,-0.3 L404.2,-0.3 L404.8,-0.2 L405.4,-0.2 L406.0,-0.2 L406.6,-0.2 L407.2,-0.3 L407.8,-0.2 L408.4,-0.2 L409.0,-0.2 L409.6,-0.2 L410.2,-0.2 L410.8,-0.3 L411.4,-0.2 L412.0,-0.2 L412.6,-0.2 L413.2,-0.2 L413.8,-0.2 L414.4,-0.2 L415.0,-0.3 L415.6,-0.3 L416.2,-0.2 L416.8,-0.3 L417.4,-0.2 L418.0,-0.2 L418.6,-0.3 L419.2,-0.2 L419.8,-0.2 L420.4,-0.2 L421.0,-0.2 L421.6,-0.2 L422.2,-0.3 L422.8,-0.2 L423.4,-0.3 L424.0,-0.2 L424.6,-0.3 L425.2,-0.2 L425.8,-0.3 L426.4,-0.2 L427.0,-0.3 L427.6,-0.3 L428.2,-0.3 L428.8,-0.4 L429.4,-0.5 L430.0,-0.5 L430.6,-0.5 L431.2,-0.4 L431.8,-0.4 L432.4,-0.4 L433.0,-0.3 L433.6,-0.3 L434.2,-0.3 L434.8,-0.3 L435.4,-0.3 L436.0,-0.3 L436.6,-0.2 L437.2,-0.2 L437.8,-0.2 L437.8,0.2 L437.2,0.2 L436.6,0.2 L436.0,0.3 L435.4,0.3 L434.8,0.3 L434.2,0.3 L433.6,0.3 L433.0,0.3 L432.4,0.4 L431.8,0.4 L431.2,0.4 L430.6,0.5 L430.0,0.5 L429.4,0.5 L428.8,0.4 L428.2,0.3 L427.6,0.3 L427.0,0.3 L426.4,0.2 L425.8,0.3 L425.2,0.2 L424.6,0.3 L424.0,0.2 L423.4,0.3 L422.8,0.2 L422.2,0.3 L421.6,0.2 L421.0,0.2 L420.4,0.2 L419.8,0.2 L419.2,0.2 L418.6,0.3 L418.0,0.2 L417.4,0.2 L416.8,0.3 L416.2,0.2 L415.6,0.3 L415.0,0.3 L414.4,0.2 L413.8,0.2 L413.2,0.2 L412.6,0.2 L412.0,0.2 L411.4,0.2 L410.8,0.3 L410.2,0.2 L409.6,0.2 L409.0,0.2 L408.4,0.2 L407.8,0.2 L407.2,0.3 L406.6,0.2 L406.0,0.2 L405.4,0.2 L404.8,0.2 L404.2,0.3 L403.6,0.3 L403.0,0.2 L402.4,0.3 L401.8,0.3 L401.2,0.2 L400.6,0.3 L400.0,0.2 L399.4,0.2 L398.8,0.3 L398.2,0.2 L397.6,0.2 L397.0,0.3 L396.4,0.3 L395.8,0.2 L395.2,0.2 L394.6,0.2 L394.0,0.2 L393.4,0.2 L392.8,0.2 L392.2,0.3 L391.6,0.2 L391.0,0.2 L390.4,0.2 L389.8,0.2 L389.2,0.2 L388.6,0.3 L388.0,0.3 L387.4,0.3 L386.8,0.2 L386.2,0.2 L385.6,0.2 L385.0,0.2 L384.4,0.2 L383.8,0.3 L383.2,0.3 L382.6,0.3 L382.0,0.2 L381.4,0.2 L380.8,0.2 L380.2,0.2 L379.6,0.2 L379.0,0.2 L378.4,0.2 L377.8,0.3 L377.2,0.2 L376.6,0.2 L376.0,0.3 L375.4,0.2 L374.8,0.2 L374.2,0.3 L373.6,0.2 L373.0,0.2 L372.4,0.2 L371.8,0.3 L371.2,0.2 L370.6,0.3 L370.0,0.3 L369.4,0.3 L368.8,0.2 L368.2,0.3 L367.6,0.2 L367.0,0.2 L366.4,0.2 L365.8,0.2 L365.2,0.2 L364.6,0.3 L364.0,0.2 L363.4,0.2 L362.8,0.3 L362.2,0.3 L361.6,0.2 L361.0,0.2 L360.4,0.2 L359.8,0.2 L359.2,0.3 L358.6,0.2 L358.0,0.2 L357.4,0.2 L356.8,0.3 L356.2,0.3 L355.6,0.3 L355.0,0.2 L354.4,0.2 L353.8,0.3 L353.2,0.2 L352.6,0.2 L352.0,0.3 L351.4,0.3 L350.8,0.2 L350.2,0.2 L349.6,0.2 L349.0,0.3 L348.4,0.3 L347.8,0.2 L347.2,0.3 L346.6,0.2 L346.0,0.3 L345.4,0.2 L344.8,0.3 L344.2,0.3 L343.6,0.2 L343.0,0.3 L342.4,0.2 L341.8,0.2 L341.2,0.3 L340.6,0.2 L340.0,0.2 L339.4,0.2 L338.8,0.3 L338.2,0.2 L337.6,0.2 L337.0,0.2 L336.4,0.3 L335.8,0.2 L335.2,0.2 L334.6,0.2 L334.0,0.2 L333.4,0.3 L332.8,0.3 L332.2,0.3 L331.6,0.4 L331.0,0.3 L330.4,0.4 L329.8,0.4 L329.2,0.4 L328.6,0.6 L328.0,0.9 L327.4,1.3 L326.8,1.3 L326.2,1.2 L325.6,1.0 L325.0,0.7 L324.4,0.6 L323.8,0.5 L323.2,0.5 L322.6,0.5 L322.0,0.6 L321.4,0.6 L320.8,0.5 L320.2,0.6 L319.6,0.7 L319.0,0.7 L318.4,0.5 L317.8,0.6 L317.2,0.7 L316.6,0.6 L316.0,0.6 L315.4,0.6 L314.8,0.6 L314.2,1.0 L313.6,1.2 L313.0,1.5 L312.4,1.7 L311.8,2.2 L311.2,2.4 L310.6,3.2 L310.0,3.9 L309.4,4.6 L308.8,4.9 L308.2,9.1 L307.6,13.9 L307.0,12.0 L306.4,8.6 L305.8,6.5 L305.2,3.5 L304.6,1.8 L304.0,0.8 L303.4,1.0 L302.8,1.4 L302.2,1.7 L301.6,2.2 L301.0,2.4 L300.4,2.5 L299.8,4.2 L299.2,3.9 L298.6,5.3 L298.0,11.9 L297.4,12.7 L296.8,13.5 L296.2,9.2 L295.6,5.1 L295.0,2.7 L294.4,1.5 L293.8,0.7 L293.2,0.9 L292.6,0.9 L292.0,0.9 L291.4,0.8 L290.8,0.7 L290.2,0.7 L289.6,0.9 L289.0,0.9 L288.4,0.8 L287.8,0.9 L287.2,0.9 L286.6,0.7 L286.0,0.9 L285.4,1.5 L284.8,1.4 L284.2,1.7 L283.6,2.2 L283.0,1.9 L282.4,2.6 L281.8,2.3 L281.2,2.6 L280.6,2.6 L280.0,3.9 L279.4,4.6 L278.8,3.9 L278.2,5.2 L277.6,5.5 L277.0,4.3 L276.4,4.4 L275.8,4.9 L275.2,4.2 L274.6,4.2 L274.0,3.0 L273.4,3.4 L272.8,2.6 L272.2,2.5 L271.6,3.0 L271.0,3.4 L270.4,3.3 L269.8,3.5 L269.2,4.2 L268.6,3.7 L268.0,3.7 L267.4,3.4 L266.8,3.4 L266.2,3.4 L265.6,3.9 L265.0,3.0 L264.4,4.1 L263.8,3.3 L263.2,4.7 L262.6,5.3 L262.0,4.9 L261.4,4.3 L260.8,5.2 L260.2,4.4 L259.6,5.1 L259.0,5.1 L258.4,4.3 L257.8,4.8 L257.2,4.5 L256.6,6.5 L256.0,5.1 L255.4,7.4 L254.8,8.2 L254.2,7.5 L253.6,7.3 L253.0,4.5 L252.4,3.5 L251.8,2.5 L251.2,2.8 L250.6,4.3 L250.0,5.2 L249.4,8.8 L248.8,6.5 L248.2,4.7 L247.6,4.4 L247.0,2.9 L246.4,3.0 L245.8,2.7 L245.2,2.6 L244.6,2.8 L244.0,2.9 L243.4,2.8 L242.8,3.1 L242.2,3.3 L241.6,4.0 L241.0,5.4 L240.4,6.5 L239.8,7.5 L239.2,6.2 L238.6,11.8 L238.0,10.9 L237.4,13.4 L236.8,13.8 L236.2,15.2 L235.6,15.5 L235.0,12.3 L234.4,14.8 L233.8,10.0 L233.2,6.5 L232.6,3.8 L232.0,2.4 L231.4,3.4 L230.8,3.6 L230.2,4.5 L229.6,3.9 L229.0,3.8 L228.4,4.3 L227.8,4.6 L227.2,4.7 L226.6,8.9 L226.0,8.3 L225.4,13.6 L224.8,16.2 L224.2,12.0 L223.6,16.3 L223.0,16.1 L222.4,14.3 L221.8,15.0 L221.2,15.8 L220.6,13.6 L220.0,12.7 L219.4,10.8 L218.8,8.0 L218.2,3.1 L217.6,2.3 L217.0,3.2 L216.4,2.9 L215.8,3.1 L215.2,4.0 L214.6,4.0 L214.0,4.3 L213.4,5.1 L212.8,6.1 L212.2,6.9 L211.6,6.8 L211.0,6.2 L210.4,7.1 L209.8,4.6 L209.2,5.3 L208.6,4.5 L208.0,3.6 L207.4,3.1 L206.8,3.9 L206.2,6.2 L205.6,10.1 L205.0,13.3 L204.4,16.0 L203.8,11.9 L203.2,8.5 L202.6,3.6 L202.0,2.7 L201.4,2.4 L200.8,2.8 L200.2,5.3 L199.6,11.2 L199.0,14.3 L198.4,12.3 L197.8,16.3 L197.2,11.3 L196.6,12.3 L196.0,13.7 L195.4,11.9 L194.8,8.1 L194.2,1.9 L193.6,0.6 L193.0,0.4 L192.4,0.6 L191.8,0.5 L191.2,0.6 L190.6,0.5 L190.0,0.6 L189.4,0.5 L188.8,0.6 L188.2,0.6 L187.6,0.5 L187.0,0.5 L186.4,0.5 L185.8,0.6 L185.2,0.6 L184.6,0.5 L184.0,0.6 L183.4,0.6 L182.8,0.6 L182.2,0.5 L181.6,0.6 L181.0,0.5 L180.4,0.5 L179.8,0.5 L179.2,0.4 L178.6,0.5 L178.0,0.4 L177.4,0.8 L176.8,1.0 L176.2,0.9 L175.6,1.0 L175.0,1.6 L174.4,1.6 L173.8,2.5 L173.2,2.3 L172.6,4.0 L172.0,4.5 L171.4,5.8 L170.8,6.1 L170.2,4.4 L169.6,3.8 L169.0,2.8 L168.4,2.4 L167.8,1.5 L167.2,2.6 L166.6,3.6 L166.0,5.4 L165.4,8.0 L164.8,9.7 L164.2,14.6 L163.6,14.6 L163.0,13.5 L162.4,11.7 L161.8,16.0 L161.2,15.5 L160.6,11.9 L160.0,11.4 L159.4,16.3 L158.8,11.6 L158.2,13.0 L157.6,14.1 L157.0,12.9 L156.4,12.9 L155.8,13.3 L155.2,10.4 L154.6,11.5 L154.0,9.6 L153.4,9.7 L152.8,6.5 L152.2,7.0 L151.6,7.3 L151.0,5.3 L150.4,5.5 L149.8,4.4 L149.2,3.6 L148.6,2.8 L148.0,2.2 L147.4,1.8 L146.8,1.5 L146.2,1.6 L145.6,1.6 L145.0,1.4 L144.4,1.2 L143.8,1.2 L143.2,1.1 L142.6,1.1 L142.0,0.9 L141.4,1.8 L140.8,2.1 L140.2,3.4 L139.6,3.7 L139.0,3.5 L138.4,4.4 L137.8,4.5 L137.2,3.9 L136.6,2.4 L136.0,2.1 L135.4,1.9 L134.8,2.1 L134.2,3.3 L133.6,3.1 L133.0,4.2 L132.4,6.0 L131.8,6.5 L131.2,8.8 L130.6,6.4 L130.0,5.1 L129.4,3.8 L128.8,3.3 L128.2,3.5 L127.6,3.4 L127.0,3.2 L126.4,2.4 L125.8,3.5 L125.2,5.3 L124.6,6.2 L124.0,7.4 L123.4,9.6 L122.8,8.5 L122.2,11.3 L121.6,8.6 L121.0,7.4 L120.4,5.7 L119.8,4.6 L119.2,3.5 L118.6,2.8 L118.0,2.9 L117.4,4.0 L116.8,5.8 L116.2,9.5 L115.6,15.4 L115.0,13.4 L114.4,14.3 L113.8,11.5 L113.2,11.3 L112.6,6.2 L112.0,5.8 L111.4,4.2 L110.8,3.3 L110.2,2.7 L109.6,1.2 L109.0,0.5 L108.4,0.5 L107.8,0.4 L107.2,0.4 L106.6,0.4 L106.0,0.4 L105.4,0.4 L104.8,0.3 L104.2,0.4 L103.6,0.4 L103.0,0.4 L102.4,0.4 L101.8,0.4 L101.2,0.4 L100.6,0.4 L100.0,0.5 L99.4,0.5 L98.8,0.5 L98.2,0.5 L97.6,0.6 L97.0,0.5 L96.4,0.4 L95.8,0.3 L95.2,0.3 L94.6,0.3 L94.0,0.3Z" fill="#6464dc"/></svg>
<div class="a" style="left:33px;top:390.5px;width:792px;height:6.2px;background:#d2d2d2;"></div>
<div class="a" style="left:33px;top:390.5px;width:61.3px;height:6.2px;background:#eeeeee;"></div>
<div class="a" style="left:799.9px;top:392.6px;width:18.2px;height:2.4px;background:#7a7a7a;border-radius:1.2px"></div>
<div class="a" style="left:819.5px;top:390.5px;width:5.5px;height:6.2px;background:#f4f4f4;"></div>
<div class="a" style="left:33px;top:396.6px;width:792px;height:37.6px;background:#f5f7fc;"></div>
<div class="a" style="left:33px;top:396.6px;width:792px;height:0.7px;background:#e4e6ec;"></div>
<div class="a" style="left:34.3px;top:399px;width:2.2px;height:34px;background:repeating-linear-gradient(#f8f9fc 0,#f8f9fc 1.1px,#dcdee2 1.1px,#dcdee2 2px)"></div>
<div class="a" style="left:37px;top:399px;width:0.8px;height:34px;background:#e2e4ea;"></div>
<div class="t" style="left:40.4px;top:403px;font-size:6.8px;color:#3c3c3c;transform:scaleX(1.0720);">Project&#160;Rate&#160;(Hz)</div>
<div class="a" style="left:40.4px;top:411.3px;width:37.1px;height:12.1px;background:#ffffff;border:0.8px solid #d6d8de;border-radius:1.5px"></div>
<div class="a" style="left:64.5px;top:411.6px;width:0.8px;height:11.6px;background:#dcdee4;"></div>
<div class="t" style="left:44.5px;top:415px;font-size:6.5px;color:#3c3c3c;transform:scaleX(0.9959);">44100</div>
<div class="a" style="left:60.6px;top:412.2px;width:3.8px;height:10.3px;background:#ffffff;"></div>
<svg style="left:68.5px;top:416.2px" width="5" height="3"><path d="M0,0H4.2L2.1,2.4Z" fill="#222"/></svg>
<div class="a" style="left:100.4px;top:400px;width:0.9px;height:10px;background:#dcdee4;"></div>
<div class="a" style="left:100.4px;top:412px;width:0.9px;height:10px;background:#dcdee4;"></div>
<div class="t" style="left:103.2px;top:403px;font-size:6.8px;color:#3c3c3c;transform:scaleX(0.9355);">Snap-To</div>
<div class="a" style="left:103.2px;top:411.3px;width:36.4px;height:12.1px;background:#ffffff;border:0.8px solid #d6d8de;border-radius:1.5px"></div>
<div class="t" style="left:104.6px;top:414px;font-size:6px;color:#7a7a7a;transform:scaleX(0.9999);">Off</div>
<svg style="left:131.2px;top:416.2px" width="5" height="3"><path d="M0,0H4.2L2.1,2.4Z" fill="#222"/></svg>
<div class="a" style="left:142.2px;top:400px;width:0.9px;height:10px;background:#dcdee4;"></div>
<div class="a" style="left:142.2px;top:412px;width:0.9px;height:10px;background:#dcdee4;"></div>
<div class="t" style="left:145.8px;top:403px;font-size:6.8px;color:#3c3c3c;transform:scaleX(1.0627);">Audio&#160;Position</div>
<div class="a" style="left:145.7px;top:412.1px;width:64.9px;height:8.2px;background:#c4c4cc;border-radius:1.4px"></div>
<div class="a" style="left:146.39999999999998px;top:412.8px;width:63.5px;height:6.8px;background:#d6d6de;border-radius:0.8px"></div>
<div class="a" style="left:156.4px;top:412.8px;width:4.8px;height:6.8px;background:#bcbcc8;"></div>
<div class="a" style="left:171.6px;top:412.8px;width:4.8px;height:6.8px;background:#bcbcc8;"></div>
<div class="a" style="left:201.8px;top:412.8px;width:4.8px;height:6.8px;background:#bcbcc8;"></div>
<div class="a" style="left:206.4px;top:412.8px;width:3.5px;height:6.8px;background:#c0c0ca;"></div>
<div class="a" style="left:146.6px;top:416.2px;width:1.8px;height:0.9px;background:#4a4ad8;"></div>
<div class="a" style="left:151.4px;top:416.2px;width:1.8px;height:0.9px;background:#4a4ad8;"></div>
<div class="t" style="left:157.09px;top:414px;font-size:5.6px;color:#3434c8;font-weight:bold;">h</div>
<div class="a" style="left:162.3px;top:416.2px;width:1.8px;height:0.9px;background:#4a4ad8;"></div>
<div class="a" style="left:166.8px;top:416.2px;width:1.8px;height:0.9px;background:#4a4ad8;"></div>
<div class="t" style="left:171.51px;top:414px;font-size:5.6px;color:#3434c8;font-weight:bold;">m</div>
<div class="a" style="left:178.4px;top:416.2px;width:1.8px;height:0.9px;background:#4a4ad8;"></div>
<div class="a" style="left:182.7px;top:416.2px;width:1.8px;height:0.9px;background:#4a4ad8;"></div>
<div class="t" style="left:186.52px;top:414px;font-size:5.6px;color:#3434c8;font-weight:bold;">.</div>
<div class="a" style="left:189.5px;top:416.2px;width:1.8px;height:0.9px;background:#4a4ad8;"></div>
<div class="a" style="left:193.5px;top:416.2px;width:1.8px;height:0.9px;background:#4a4ad8;"></div>
<div class="a" style="left:197.6px;top:416.2px;width:1.8px;height:0.9px;background:#4a4ad8;"></div>
<div class="t" style="left:202.64px;top:414px;font-size:5.6px;color:#3434c8;font-weight:bold;">s</div>
<svg style="left:206.29999999999998px;top:415px" width="4" height="3"><path d="M0,0H3.6L1.8,2.4Z" fill="#111"/></svg>
<div class="a" style="left:217px;top:412.1px;width:64.9px;height:8.2px;background:#c4c4cc;border-radius:1.4px"></div>
<div class="a" style="left:217.7px;top:412.8px;width:63.5px;height:6.8px;background:#d6d6de;border-radius:0.8px"></div>
<div class="a" style="left:226.9px;top:412.8px;width:4.8px;height:6.8px;background:#bcbcc8;"></div>
<div class="a" style="left:242.8px;top:412.8px;width:4.8px;height:6.8px;background:#bcbcc8;"></div>
<div class="a" style="left:272.8px;top:412.8px;width:4.8px;height:6.8px;background:#bcbcc8;"></div>
<div class="a" style="left:277.7px;top:412.8px;width:3.5px;height:6.8px;background:#c0c0ca;"></div>
<div class="t" style="left:217.94px;top:414px;font-size:5.6px;color:#3434c8;font-weight:bold;">0</div>
<div class="t" style="left:222.84px;top:414px;font-size:5.6px;color:#3434c8;font-weight:bold;">0</div>
<div class="t" style="left:227.59px;top:414px;font-size:5.6px;color:#3434c8;font-weight:bold;">h</div>
<div class="t" style="left:232.84px;top:414px;font-size:5.6px;color:#3434c8;font-weight:bold;">0</div>
<div class="t" style="left:237.94px;top:414px;font-size:5.6px;color:#3434c8;font-weight:bold;">0</div>
<div class="t" style="left:242.71px;top:414px;font-size:5.6px;color:#3434c8;font-weight:bold;">m</div>
<div class="t" style="left:249.14px;top:414px;font-size:5.6px;color:#3434c8;font-weight:bold;">0</div>
<div class="t" style="left:253.84px;top:414px;font-size:5.6px;color:#3434c8;font-weight:bold;">0</div>
<div class="t" style="left:257.82px;top:414px;font-size:5.6px;color:#3434c8;font-weight:bold;">.</div>
<div class="t" style="left:259.34px;top:414px;font-size:5.6px;color:#3434c8;font-weight:bold;">0</div>
<div class="t" style="left:264.04px;top:414px;font-size:5.6px;color:#3434c8;font-weight:bold;">0</div>
<div class="t" style="left:268.74px;top:414px;font-size:5.6px;color:#3434c8;font-weight:bold;">0</div>
<div class="t" style="left:273.64px;top:414px;font-size:5.6px;color:#3434c8;font-weight:bold;">s</div>
<svg style="left:277.59999999999997px;top:415px" width="4" height="3"><path d="M0,0H3.6L1.8,2.4Z" fill="#111"/></svg>
<div class="a" style="left:284.3px;top:412.1px;width:64.9px;height:8.2px;background:#c4c4cc;border-radius:1.4px"></div>
<div class="a" style="left:285.0px;top:412.8px;width:63.5px;height:6.8px;background:#d6d6de;border-radius:0.8px"></div>
<div class="a" style="left:294.2px;top:412.8px;width:4.8px;height:6.8px;background:#bcbcc8;"></div>
<div class="a" style="left:310.1px;top:412.8px;width:4.8px;height:6.8px;background:#bcbcc8;"></div>
<div class="a" style="left:340.1px;top:412.8px;width:4.8px;height:6.8px;background:#bcbcc8;"></div>
<div class="a" style="left:345.0px;top:412.8px;width:3.5px;height:6.8px;background:#c0c0ca;"></div>
<div class="t" style="left:285.24px;top:414px;font-size:5.6px;color:#3434c8;font-weight:bold;">0</div>
<div class="t" style="left:290.14px;top:414px;font-size:5.6px;color:#3434c8;font-weight:bold;">0</div>
<div class="t" style="left:294.89px;top:414px;font-size:5.6px;color:#3434c8;font-weight:bold;">h</div>
<div class="t" style="left:300.14px;top:414px;font-size:5.6px;color:#3434c8;font-weight:bold;">0</div>
<div class="t" style="left:305.24px;top:414px;font-size:5.6px;color:#3434c8;font-weight:bold;">0</div>
<div class="t" style="left:310.01px;top:414px;font-size:5.6px;color:#3434c8;font-weight:bold;">m</div>
<div class="t" style="left:316.44px;top:414px;font-size:5.6px;color:#3434c8;font-weight:bold;">0</div>
<div class="t" style="left:321.14px;top:414px;font-size:5.6px;color:#3434c8;font-weight:bold;">0</div>
<div class="t" style="left:325.12px;top:414px;font-size:5.6px;color:#3434c8;font-weight:bold;">.</div>
<div class="t" style="left:326.64px;top:414px;font-size:5.6px;color:#3434c8;font-weight:bold;">0</div>
<div class="t" style="left:331.34px;top:414px;font-size:5.6px;color:#3434c8;font-weight:bold;">0</div>
<div class="t" style="left:336.04px;top:414px;font-size:5.6px;color:#3434c8;font-weight:bold;">0</div>
<div class="t" style="left:340.94px;top:414px;font-size:5.6px;color:#3434c8;font-weight:bold;">s</div>
<svg style="left:344.9px;top:415px" width="4" height="3"><path d="M0,0H3.6L1.8,2.4Z" fill="#111"/></svg>
<div class="a" style="left:214px;top:400px;width:0.9px;height:10px;background:#dcdee4;"></div>
<div class="a" style="left:214px;top:412px;width:0.9px;height:10px;background:#dcdee4;"></div>
<div class="a" style="left:216.9px;top:399.5px;width:131.3px;height:11px;background:#ffffff;border:0.8px solid #d6d8de;border-radius:1.5px"></div>
<div class="t" style="left:220.9px;top:402px;font-size:6px;color:#3c3c3c;transform:scaleX(1.0170);">Start&#160;and&#160;End&#160;of&#160;Selection</div>
<svg style="left:340px;top:404px" width="5" height="3"><path d="M0,0H4.2L2.1,2.4Z" fill="#222"/></svg>
<div class="a" style="left:33px;top:434.2px;width:792px;height:10.8px;background:#f2f2f0;"></div>
<div class="a" style="left:33px;top:434.2px;width:792px;height:0.7px;background:#d8d8d8;"></div>
<div class="t" style="left:35px;top:438px;font-size:6.8px;color:#3c3c3c;transform:scaleX(0.9918);">Stopped.</div>
<div class="t" style="left:123.3px;top:438px;font-size:6.8px;color:#3c3c3c;transform:scaleX(0.9865);">Click&#160;and&#160;drag&#160;to&#160;select&#160;audio</div>
</body></html>
